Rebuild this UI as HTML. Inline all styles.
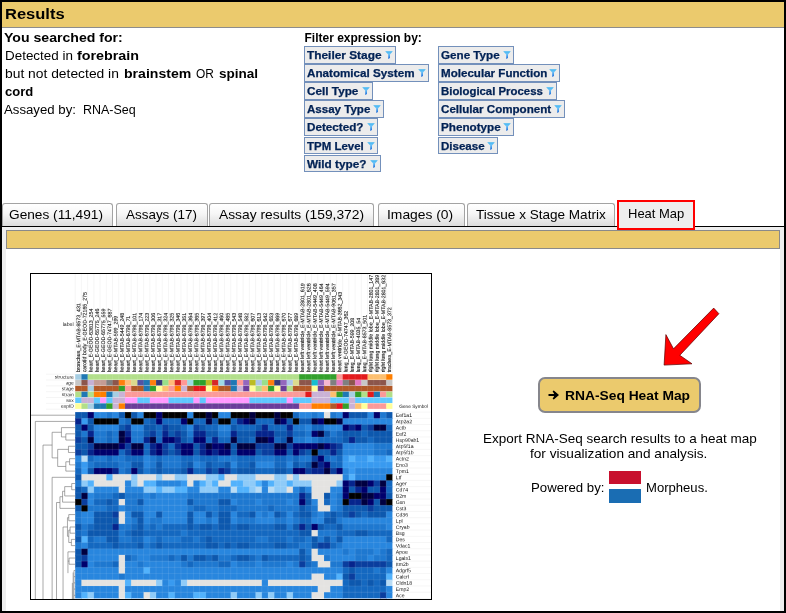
<!DOCTYPE html>
<html><head><meta charset="utf-8">
<style>
html,body{margin:0;padding:0;}
body{width:786px;height:613px;position:relative;overflow:hidden;background:#000;font-family:"Liberation Sans",sans-serif;color:#000;}
#page{position:absolute;left:2px;top:2px;width:782px;height:609px;background:#fff;overflow:hidden;}
#L{position:absolute;left:0;top:0;width:782px;height:609px;will-change:transform;}
.abs{position:absolute;white-space:nowrap;}
#hdr{position:absolute;left:0;top:0;width:782px;height:25px;background:#ebca6d;border-bottom:1px solid #8c8c8c;}
#hdr span{position:absolute;left:4px;top:3px;font-weight:bold;font-size:16px;letter-spacing:0.1px;line-height:18px;}
.fb{position:absolute;height:15.6px;border:1px solid #7390bb;background:#ececec;box-sizing:content-box;}
.fb span{position:absolute;left:1.7px;top:1px;font-weight:bold;font-size:10px;line-height:15px;color:#002255;-webkit-text-stroke:0.25px #002255;white-space:nowrap;}
.fb svg{position:absolute;right:2px;top:4px;}
.tab{position:absolute;top:201px;height:23px;border:1px solid #a3a3a3;border-bottom:none;border-radius:3px 3px 0 0;background:linear-gradient(#ffffff 0%,#f6f6f6 45%,#dcdcdc 100%);box-sizing:border-box;font-size:13px;line-height:21px;white-space:nowrap;}
</style></head><body>
<div id="page"><div id="L">
<div id="hdr"></div>
<div class="abs" style="left:1.80px;top:27.00px;font-size:12.5px;line-height:18px;transform-origin:0 0;transform:scaleX(1.1276);font-weight:bold;">You searched for:</div>
<div class="abs" style="left:2.60px;top:45.00px;font-size:12.5px;line-height:18px;transform-origin:0 0;transform:scaleX(1.0738);">Detected in</div>
<div class="abs" style="left:75.00px;top:45.00px;font-size:12.5px;line-height:18px;transform-origin:0 0;transform:scaleX(1.1442);font-weight:bold;">forebrain</div>
<div class="abs" style="left:2.60px;top:63.00px;font-size:12.5px;line-height:18px;transform-origin:0 0;transform:scaleX(1.1073);">but not detected in</div>
<div class="abs" style="left:121.70px;top:63.00px;font-size:12.5px;line-height:18px;transform-origin:0 0;transform:scaleX(1.1264);font-weight:bold;">brainstem</div>
<div class="abs" style="left:193.80px;top:63.00px;font-size:12.5px;line-height:18px;transform-origin:0 0;transform:scaleX(0.9547);">OR</div>
<div class="abs" style="left:216.50px;top:63.00px;font-size:12.5px;line-height:18px;transform-origin:0 0;transform:scaleX(1.0824);font-weight:bold;">spinal</div>
<div class="abs" style="left:2.60px;top:81.00px;font-size:12.5px;line-height:18px;transform-origin:0 0;transform:scaleX(1.0445);font-weight:bold;">cord</div>
<div class="abs" style="left:2.40px;top:99.00px;font-size:12.5px;line-height:18px;transform-origin:0 0;transform:scaleX(1.0559);">Assayed by:</div>
<div class="abs" style="left:80.50px;top:99.00px;font-size:12.5px;line-height:18px;transform-origin:0 0;transform:scaleX(0.9982);">RNA-Seq</div>
<div class="abs" style="left:3.00px;top:3.00px;font-size:14px;line-height:18px;transform-origin:0 0;transform:scaleX(1.1784);font-weight:bold;">Results</div>
<div class="abs" style="left:302.5px;top:29px;font-weight:bold;font-size:12px;line-height:14px;">Filter expression by:</div>
<div class="fb" style="left:302px;top:44.0px;width:90.0px"><span style="transform-origin:0 0;transform:scaleX(1.1861)">Theiler Stage</span><svg width="8" height="8" viewBox="0 0 8 8"><defs><linearGradient id="fg" x1="0" y1="0" x2="0" y2="1"><stop offset="0" stop-color="#3db4f2"/><stop offset="0.35" stop-color="#6cc4f8"/><stop offset="1" stop-color="#1a68d8"/></linearGradient></defs><path d="M0.2 0.3 H7.8 L5 3.6 V6.9 L3.2 7.9 V3.6 Z" fill="url(#fg)"/></svg></div>
<div class="fb" style="left:302px;top:62.1px;width:122.6px"><span style="transform-origin:0 0;transform:scaleX(1.1651)">Anatomical System</span><svg width="8" height="8" viewBox="0 0 8 8"><defs><linearGradient id="fg" x1="0" y1="0" x2="0" y2="1"><stop offset="0" stop-color="#3db4f2"/><stop offset="0.35" stop-color="#6cc4f8"/><stop offset="1" stop-color="#1a68d8"/></linearGradient></defs><path d="M0.2 0.3 H7.8 L5 3.6 V6.9 L3.2 7.9 V3.6 Z" fill="url(#fg)"/></svg></div>
<div class="fb" style="left:302px;top:80.2px;width:66.7px"><span style="transform-origin:0 0;transform:scaleX(1.1757)">Cell Type</span><svg width="8" height="8" viewBox="0 0 8 8"><defs><linearGradient id="fg" x1="0" y1="0" x2="0" y2="1"><stop offset="0" stop-color="#3db4f2"/><stop offset="0.35" stop-color="#6cc4f8"/><stop offset="1" stop-color="#1a68d8"/></linearGradient></defs><path d="M0.2 0.3 H7.8 L5 3.6 V6.9 L3.2 7.9 V3.6 Z" fill="url(#fg)"/></svg></div>
<div class="fb" style="left:302px;top:98.3px;width:78.4px"><span style="transform-origin:0 0;transform:scaleX(1.1542)">Assay Type</span><svg width="8" height="8" viewBox="0 0 8 8"><defs><linearGradient id="fg" x1="0" y1="0" x2="0" y2="1"><stop offset="0" stop-color="#3db4f2"/><stop offset="0.35" stop-color="#6cc4f8"/><stop offset="1" stop-color="#1a68d8"/></linearGradient></defs><path d="M0.2 0.3 H7.8 L5 3.6 V6.9 L3.2 7.9 V3.6 Z" fill="url(#fg)"/></svg></div>
<div class="fb" style="left:302px;top:116.4px;width:71.5px"><span style="transform-origin:0 0;transform:scaleX(1.1683)">Detected?</span><svg width="8" height="8" viewBox="0 0 8 8"><defs><linearGradient id="fg" x1="0" y1="0" x2="0" y2="1"><stop offset="0" stop-color="#3db4f2"/><stop offset="0.35" stop-color="#6cc4f8"/><stop offset="1" stop-color="#1a68d8"/></linearGradient></defs><path d="M0.2 0.3 H7.8 L5 3.6 V6.9 L3.2 7.9 V3.6 Z" fill="url(#fg)"/></svg></div>
<div class="fb" style="left:302px;top:134.5px;width:71.5px"><span style="transform-origin:0 0;transform:scaleX(1.1462)">TPM Level</span><svg width="8" height="8" viewBox="0 0 8 8"><defs><linearGradient id="fg" x1="0" y1="0" x2="0" y2="1"><stop offset="0" stop-color="#3db4f2"/><stop offset="0.35" stop-color="#6cc4f8"/><stop offset="1" stop-color="#1a68d8"/></linearGradient></defs><path d="M0.2 0.3 H7.8 L5 3.6 V6.9 L3.2 7.9 V3.6 Z" fill="url(#fg)"/></svg></div>
<div class="fb" style="left:302px;top:152.6px;width:74.7px"><span style="transform-origin:0 0;transform:scaleX(1.1789)">Wild type?</span><svg width="8" height="8" viewBox="0 0 8 8"><defs><linearGradient id="fg" x1="0" y1="0" x2="0" y2="1"><stop offset="0" stop-color="#3db4f2"/><stop offset="0.35" stop-color="#6cc4f8"/><stop offset="1" stop-color="#1a68d8"/></linearGradient></defs><path d="M0.2 0.3 H7.8 L5 3.6 V6.9 L3.2 7.9 V3.6 Z" fill="url(#fg)"/></svg></div>
<div class="fb" style="left:436px;top:44.0px;width:73.6px"><span style="transform-origin:0 0;transform:scaleX(1.1649)">Gene Type</span><svg width="8" height="8" viewBox="0 0 8 8"><defs><linearGradient id="fg" x1="0" y1="0" x2="0" y2="1"><stop offset="0" stop-color="#3db4f2"/><stop offset="0.35" stop-color="#6cc4f8"/><stop offset="1" stop-color="#1a68d8"/></linearGradient></defs><path d="M0.2 0.3 H7.8 L5 3.6 V6.9 L3.2 7.9 V3.6 Z" fill="url(#fg)"/></svg></div>
<div class="fb" style="left:436px;top:62.1px;width:120.4px"><span style="transform-origin:0 0;transform:scaleX(1.1596)">Molecular Function</span><svg width="8" height="8" viewBox="0 0 8 8"><defs><linearGradient id="fg" x1="0" y1="0" x2="0" y2="1"><stop offset="0" stop-color="#3db4f2"/><stop offset="0.35" stop-color="#6cc4f8"/><stop offset="1" stop-color="#1a68d8"/></linearGradient></defs><path d="M0.2 0.3 H7.8 L5 3.6 V6.9 L3.2 7.9 V3.6 Z" fill="url(#fg)"/></svg></div>
<div class="fb" style="left:436px;top:80.2px;width:116.5px"><span style="transform-origin:0 0;transform:scaleX(1.1376)">Biological Process</span><svg width="8" height="8" viewBox="0 0 8 8"><defs><linearGradient id="fg" x1="0" y1="0" x2="0" y2="1"><stop offset="0" stop-color="#3db4f2"/><stop offset="0.35" stop-color="#6cc4f8"/><stop offset="1" stop-color="#1a68d8"/></linearGradient></defs><path d="M0.2 0.3 H7.8 L5 3.6 V6.9 L3.2 7.9 V3.6 Z" fill="url(#fg)"/></svg></div>
<div class="fb" style="left:436px;top:98.3px;width:124.5px"><span style="transform-origin:0 0;transform:scaleX(1.1598)">Cellular Component</span><svg width="8" height="8" viewBox="0 0 8 8"><defs><linearGradient id="fg" x1="0" y1="0" x2="0" y2="1"><stop offset="0" stop-color="#3db4f2"/><stop offset="0.35" stop-color="#6cc4f8"/><stop offset="1" stop-color="#1a68d8"/></linearGradient></defs><path d="M0.2 0.3 H7.8 L5 3.6 V6.9 L3.2 7.9 V3.6 Z" fill="url(#fg)"/></svg></div>
<div class="fb" style="left:436px;top:116.4px;width:74.4px"><span style="transform-origin:0 0;transform:scaleX(1.1677)">Phenotype</span><svg width="8" height="8" viewBox="0 0 8 8"><defs><linearGradient id="fg" x1="0" y1="0" x2="0" y2="1"><stop offset="0" stop-color="#3db4f2"/><stop offset="0.35" stop-color="#6cc4f8"/><stop offset="1" stop-color="#1a68d8"/></linearGradient></defs><path d="M0.2 0.3 H7.8 L5 3.6 V6.9 L3.2 7.9 V3.6 Z" fill="url(#fg)"/></svg></div>
<div class="fb" style="left:436px;top:134.5px;width:58.3px"><span style="transform-origin:0 0;transform:scaleX(1.1531)">Disease</span><svg width="8" height="8" viewBox="0 0 8 8"><defs><linearGradient id="fg" x1="0" y1="0" x2="0" y2="1"><stop offset="0" stop-color="#3db4f2"/><stop offset="0.35" stop-color="#6cc4f8"/><stop offset="1" stop-color="#1a68d8"/></linearGradient></defs><path d="M0.2 0.3 H7.8 L5 3.6 V6.9 L3.2 7.9 V3.6 Z" fill="url(#fg)"/></svg></div>
<div class="tab" style="left:0.0px;width:111.4px;"><span style="position:absolute;left:6.3px;top:0;transform-origin:0 0;transform:scaleX(1.0517)">Genes (11,491)</span></div>
<div class="tab" style="left:114.0px;width:91.6px;"><span style="position:absolute;left:9.0px;top:0;transform-origin:0 0;transform:scaleX(1.0344)">Assays (17)</span></div>
<div class="tab" style="left:207.2px;width:165.3px;"><span style="position:absolute;left:9.1px;top:0;transform-origin:0 0;transform:scaleX(1.0624)">Assay results (159,372)</span></div>
<div class="tab" style="left:375.6px;width:87.1px;"><span style="position:absolute;left:8.2px;top:0;transform-origin:0 0;transform:scaleX(1.0653)">Images (0)</span></div>
<div class="tab" style="left:464.7px;width:148.6px;"><span style="position:absolute;left:8.2px;top:0;transform-origin:0 0;transform:scaleX(1.0416)">Tissue x Stage Matrix</span></div>
<div class="abs" style="left:0;top:224px;width:782px;height:1px;background:#000"></div>
<div class="abs" style="left:615px;top:198px;width:74px;height:26px;border:2px solid #f00;background:#eeeeee;z-index:5;"><span style="position:absolute;left:9.4px;top:3px;font-size:13px;line-height:18px;transform-origin:0 0;transform:scaleX(0.9987)">Heat Map</span></div>
<div class="abs" style="left:0;top:225px;width:782px;height:384px;background:#fff;border-left:4px solid #eee;border-right:4px solid #eee;border-top:3px solid #eee;box-sizing:border-box"></div>
<div class="abs" style="left:4px;top:228px;width:774px;height:19px;background:#ebca6d;border:1px solid #8a8a8a;box-sizing:border-box"></div>
<div class="abs" style="left:536px;top:375px;width:163px;height:36px;box-sizing:border-box;border:2px solid #86868c;border-radius:7px;background:#ebca6d"></div>
<div class="abs" style="left:563.00px;top:386.00px;font-size:13px;line-height:16px;transform-origin:0 0;transform:scaleX(1.0616);font-weight:bold;">RNA-Seq Heat Map</div>
<svg class="abs" style="left:546px;top:388px" width="12" height="10" viewBox="0 0 12 10"><path d="M0.5 4 H6.2 L4.6 1.3 L5.8 0.6 L11 5 L5.8 9.4 L4.6 8.7 L6.2 6 H0.5 Z" fill="#000"/></svg>
<div class="abs" style="left:480.60px;top:429.00px;font-size:13px;line-height:16px;transform-origin:0 0;transform:scaleX(1.0378);">Export RNA-Seq search results to a heat map</div>
<div class="abs" style="left:528.00px;top:444.00px;font-size:13px;line-height:16px;transform-origin:0 0;transform:scaleX(1.0491);">for visualization and analysis.</div>
<div class="abs" style="left:529.00px;top:478.00px;font-size:13px;line-height:16px;transform-origin:0 0;transform:scaleX(1.0157);">Powered by:</div>
<div class="abs" style="left:643.60px;top:478.00px;font-size:13px;line-height:16px;transform-origin:0 0;transform:scaleX(1.0062);">Morpheus.</div>
<div class="abs" style="left:607px;top:469px;width:32px;height:13px;background:#c8102e"></div>
<div class="abs" style="left:607px;top:487px;width:32px;height:13.5px;background:#1a6db3"></div>
<svg class="abs" style="left:648px;top:293px" width="80" height="80" viewBox="650 295 80 80"><path d="M713.7 308.1 L718.9 313.7 L679.8 355.3 L692 363.8 L664.1 365.1 L665.9 334.6 L673.5 348.8 Z" fill="#ff0000" stroke="#5a0000" stroke-width="0.7" stroke-linejoin="miter"/></svg>
<div class="abs" style="left:28px;top:271px;width:402px;height:327px;box-sizing:border-box;border:1px solid #000;background:#fff"></div>
<svg class="abs" style="left:29px;top:272px" width="400" height="325" viewBox="31 274 400 325" font-family="Liberation Sans, sans-serif" text-rendering="geometricPrecision">
<line x1="75.20" y1="274" x2="75.20" y2="373" stroke="#f0f0f0" stroke-width="0.6"/>
<line x1="81.42" y1="274" x2="81.42" y2="373" stroke="#f0f0f0" stroke-width="0.6"/>
<line x1="87.64" y1="274" x2="87.64" y2="373" stroke="#f0f0f0" stroke-width="0.6"/>
<line x1="93.86" y1="274" x2="93.86" y2="373" stroke="#f0f0f0" stroke-width="0.6"/>
<line x1="100.08" y1="274" x2="100.08" y2="373" stroke="#f0f0f0" stroke-width="0.6"/>
<line x1="106.30" y1="274" x2="106.30" y2="373" stroke="#f0f0f0" stroke-width="0.6"/>
<line x1="112.52" y1="274" x2="112.52" y2="373" stroke="#f0f0f0" stroke-width="0.6"/>
<line x1="118.74" y1="274" x2="118.74" y2="373" stroke="#f0f0f0" stroke-width="0.6"/>
<line x1="124.96" y1="274" x2="124.96" y2="373" stroke="#f0f0f0" stroke-width="0.6"/>
<line x1="131.18" y1="274" x2="131.18" y2="373" stroke="#f0f0f0" stroke-width="0.6"/>
<line x1="137.40" y1="274" x2="137.40" y2="373" stroke="#f0f0f0" stroke-width="0.6"/>
<line x1="143.62" y1="274" x2="143.62" y2="373" stroke="#f0f0f0" stroke-width="0.6"/>
<line x1="149.84" y1="274" x2="149.84" y2="373" stroke="#f0f0f0" stroke-width="0.6"/>
<line x1="156.06" y1="274" x2="156.06" y2="373" stroke="#f0f0f0" stroke-width="0.6"/>
<line x1="162.28" y1="274" x2="162.28" y2="373" stroke="#f0f0f0" stroke-width="0.6"/>
<line x1="168.50" y1="274" x2="168.50" y2="373" stroke="#f0f0f0" stroke-width="0.6"/>
<line x1="174.72" y1="274" x2="174.72" y2="373" stroke="#f0f0f0" stroke-width="0.6"/>
<line x1="180.94" y1="274" x2="180.94" y2="373" stroke="#f0f0f0" stroke-width="0.6"/>
<line x1="187.16" y1="274" x2="187.16" y2="373" stroke="#f0f0f0" stroke-width="0.6"/>
<line x1="193.38" y1="274" x2="193.38" y2="373" stroke="#f0f0f0" stroke-width="0.6"/>
<line x1="199.60" y1="274" x2="199.60" y2="373" stroke="#f0f0f0" stroke-width="0.6"/>
<line x1="205.82" y1="274" x2="205.82" y2="373" stroke="#f0f0f0" stroke-width="0.6"/>
<line x1="212.04" y1="274" x2="212.04" y2="373" stroke="#f0f0f0" stroke-width="0.6"/>
<line x1="218.26" y1="274" x2="218.26" y2="373" stroke="#f0f0f0" stroke-width="0.6"/>
<line x1="224.48" y1="274" x2="224.48" y2="373" stroke="#f0f0f0" stroke-width="0.6"/>
<line x1="230.70" y1="274" x2="230.70" y2="373" stroke="#f0f0f0" stroke-width="0.6"/>
<line x1="236.92" y1="274" x2="236.92" y2="373" stroke="#f0f0f0" stroke-width="0.6"/>
<line x1="243.14" y1="274" x2="243.14" y2="373" stroke="#f0f0f0" stroke-width="0.6"/>
<line x1="249.36" y1="274" x2="249.36" y2="373" stroke="#f0f0f0" stroke-width="0.6"/>
<line x1="255.58" y1="274" x2="255.58" y2="373" stroke="#f0f0f0" stroke-width="0.6"/>
<line x1="261.80" y1="274" x2="261.80" y2="373" stroke="#f0f0f0" stroke-width="0.6"/>
<line x1="268.02" y1="274" x2="268.02" y2="373" stroke="#f0f0f0" stroke-width="0.6"/>
<line x1="274.24" y1="274" x2="274.24" y2="373" stroke="#f0f0f0" stroke-width="0.6"/>
<line x1="280.46" y1="274" x2="280.46" y2="373" stroke="#f0f0f0" stroke-width="0.6"/>
<line x1="286.68" y1="274" x2="286.68" y2="373" stroke="#f0f0f0" stroke-width="0.6"/>
<line x1="292.90" y1="274" x2="292.90" y2="373" stroke="#f0f0f0" stroke-width="0.6"/>
<line x1="299.12" y1="274" x2="299.12" y2="373" stroke="#f0f0f0" stroke-width="0.6"/>
<line x1="305.34" y1="274" x2="305.34" y2="373" stroke="#f0f0f0" stroke-width="0.6"/>
<line x1="311.56" y1="274" x2="311.56" y2="373" stroke="#f0f0f0" stroke-width="0.6"/>
<line x1="317.78" y1="274" x2="317.78" y2="373" stroke="#f0f0f0" stroke-width="0.6"/>
<line x1="324.00" y1="274" x2="324.00" y2="373" stroke="#f0f0f0" stroke-width="0.6"/>
<line x1="330.22" y1="274" x2="330.22" y2="373" stroke="#f0f0f0" stroke-width="0.6"/>
<line x1="336.44" y1="274" x2="336.44" y2="373" stroke="#f0f0f0" stroke-width="0.6"/>
<line x1="342.66" y1="274" x2="342.66" y2="373" stroke="#f0f0f0" stroke-width="0.6"/>
<line x1="348.88" y1="274" x2="348.88" y2="373" stroke="#f0f0f0" stroke-width="0.6"/>
<line x1="355.10" y1="274" x2="355.10" y2="373" stroke="#f0f0f0" stroke-width="0.6"/>
<line x1="361.32" y1="274" x2="361.32" y2="373" stroke="#f0f0f0" stroke-width="0.6"/>
<line x1="367.54" y1="274" x2="367.54" y2="373" stroke="#f0f0f0" stroke-width="0.6"/>
<line x1="373.76" y1="274" x2="373.76" y2="373" stroke="#f0f0f0" stroke-width="0.6"/>
<line x1="379.98" y1="274" x2="379.98" y2="373" stroke="#f0f0f0" stroke-width="0.6"/>
<line x1="386.20" y1="274" x2="386.20" y2="373" stroke="#f0f0f0" stroke-width="0.6"/>
<line x1="392.42" y1="274" x2="392.42" y2="373" stroke="#f0f0f0" stroke-width="0.6"/>
<line x1="46" y1="374.20" x2="75" y2="374.20" stroke="#eeeeee" stroke-width="0.6"/>
<line x1="46" y1="380.03" x2="75" y2="380.03" stroke="#eeeeee" stroke-width="0.6"/>
<line x1="46" y1="385.86" x2="75" y2="385.86" stroke="#eeeeee" stroke-width="0.6"/>
<line x1="46" y1="391.69" x2="75" y2="391.69" stroke="#eeeeee" stroke-width="0.6"/>
<line x1="46" y1="397.52" x2="75" y2="397.52" stroke="#eeeeee" stroke-width="0.6"/>
<line x1="46" y1="403.35" x2="75" y2="403.35" stroke="#eeeeee" stroke-width="0.6"/>
<line x1="46" y1="409.18" x2="75" y2="409.18" stroke="#eeeeee" stroke-width="0.6"/>
<line x1="393" y1="412.10" x2="431" y2="412.10" stroke="#f0f0f0" stroke-width="0.6"/>
<line x1="393" y1="418.31" x2="431" y2="418.31" stroke="#f0f0f0" stroke-width="0.6"/>
<line x1="393" y1="424.52" x2="431" y2="424.52" stroke="#f0f0f0" stroke-width="0.6"/>
<line x1="393" y1="430.73" x2="431" y2="430.73" stroke="#f0f0f0" stroke-width="0.6"/>
<line x1="393" y1="436.94" x2="431" y2="436.94" stroke="#f0f0f0" stroke-width="0.6"/>
<line x1="393" y1="443.15" x2="431" y2="443.15" stroke="#f0f0f0" stroke-width="0.6"/>
<line x1="393" y1="449.36" x2="431" y2="449.36" stroke="#f0f0f0" stroke-width="0.6"/>
<line x1="393" y1="455.57" x2="431" y2="455.57" stroke="#f0f0f0" stroke-width="0.6"/>
<line x1="393" y1="461.78" x2="431" y2="461.78" stroke="#f0f0f0" stroke-width="0.6"/>
<line x1="393" y1="467.99" x2="431" y2="467.99" stroke="#f0f0f0" stroke-width="0.6"/>
<line x1="393" y1="474.20" x2="431" y2="474.20" stroke="#f0f0f0" stroke-width="0.6"/>
<line x1="393" y1="480.41" x2="431" y2="480.41" stroke="#f0f0f0" stroke-width="0.6"/>
<line x1="393" y1="486.62" x2="431" y2="486.62" stroke="#f0f0f0" stroke-width="0.6"/>
<line x1="393" y1="492.83" x2="431" y2="492.83" stroke="#f0f0f0" stroke-width="0.6"/>
<line x1="393" y1="499.04" x2="431" y2="499.04" stroke="#f0f0f0" stroke-width="0.6"/>
<line x1="393" y1="505.25" x2="431" y2="505.25" stroke="#f0f0f0" stroke-width="0.6"/>
<line x1="393" y1="511.46" x2="431" y2="511.46" stroke="#f0f0f0" stroke-width="0.6"/>
<line x1="393" y1="517.67" x2="431" y2="517.67" stroke="#f0f0f0" stroke-width="0.6"/>
<line x1="393" y1="523.88" x2="431" y2="523.88" stroke="#f0f0f0" stroke-width="0.6"/>
<line x1="393" y1="530.09" x2="431" y2="530.09" stroke="#f0f0f0" stroke-width="0.6"/>
<line x1="393" y1="536.30" x2="431" y2="536.30" stroke="#f0f0f0" stroke-width="0.6"/>
<line x1="393" y1="542.51" x2="431" y2="542.51" stroke="#f0f0f0" stroke-width="0.6"/>
<line x1="393" y1="548.72" x2="431" y2="548.72" stroke="#f0f0f0" stroke-width="0.6"/>
<line x1="393" y1="554.93" x2="431" y2="554.93" stroke="#f0f0f0" stroke-width="0.6"/>
<line x1="393" y1="561.14" x2="431" y2="561.14" stroke="#f0f0f0" stroke-width="0.6"/>
<line x1="393" y1="567.35" x2="431" y2="567.35" stroke="#f0f0f0" stroke-width="0.6"/>
<line x1="393" y1="573.56" x2="431" y2="573.56" stroke="#f0f0f0" stroke-width="0.6"/>
<line x1="393" y1="579.77" x2="431" y2="579.77" stroke="#f0f0f0" stroke-width="0.6"/>
<line x1="393" y1="585.98" x2="431" y2="585.98" stroke="#f0f0f0" stroke-width="0.6"/>
<line x1="393" y1="592.19" x2="431" y2="592.19" stroke="#f0f0f0" stroke-width="0.6"/>
<line x1="393" y1="598.40" x2="431" y2="598.40" stroke="#f0f0f0" stroke-width="0.6"/>
<text transform="translate(80.01 372.3) rotate(-89.7)" font-size="5.25" fill="#111" stroke="#111" stroke-width="0.1">bronchus_E-MTAB-8573_431</text>
<text transform="translate(86.23 372.3) rotate(-89.7)" font-size="5.25" fill="#111" stroke="#111" stroke-width="0.1">carotid body_E-GEOD-72165_275</text>
<text transform="translate(92.45 372.3) rotate(-89.7)" font-size="5.25" fill="#111" stroke="#111" stroke-width="0.1">heart_E-GEOD-63813_254</text>
<text transform="translate(98.67 372.3) rotate(-89.7)" font-size="5.25" fill="#111" stroke="#111" stroke-width="0.1">heart_E-GEOD-65775_246</text>
<text transform="translate(104.89 372.3) rotate(-89.7)" font-size="5.25" fill="#111" stroke="#111" stroke-width="0.1">heart_E-GEOD-65775_559</text>
<text transform="translate(111.11 372.3) rotate(-89.7)" font-size="5.25" fill="#111" stroke="#111" stroke-width="0.1">heart_E-GEOD-74747_687</text>
<text transform="translate(117.33 372.3) rotate(-89.7)" font-size="5.25" fill="#111" stroke="#111" stroke-width="0.1">heart_E-MTAB-599_299</text>
<text transform="translate(123.55 372.3) rotate(-89.7)" font-size="5.25" fill="#111" stroke="#111" stroke-width="0.1">heart_E-MTAB-5449_248</text>
<text transform="translate(129.77 372.3) rotate(-89.7)" font-size="5.25" fill="#111" stroke="#111" stroke-width="0.1">heart_E-MTAB-6798_71</text>
<text transform="translate(135.99 372.3) rotate(-89.7)" font-size="5.25" fill="#111" stroke="#111" stroke-width="0.1">heart_E-MTAB-6798_101</text>
<text transform="translate(142.21 372.3) rotate(-89.7)" font-size="5.25" fill="#111" stroke="#111" stroke-width="0.1">heart_E-MTAB-6798_174</text>
<text transform="translate(148.43 372.3) rotate(-89.7)" font-size="5.25" fill="#111" stroke="#111" stroke-width="0.1">heart_E-MTAB-6798_223</text>
<text transform="translate(154.65 372.3) rotate(-89.7)" font-size="5.25" fill="#111" stroke="#111" stroke-width="0.1">heart_E-MTAB-6798_306</text>
<text transform="translate(160.87 372.3) rotate(-89.7)" font-size="5.25" fill="#111" stroke="#111" stroke-width="0.1">heart_E-MTAB-6798_317</text>
<text transform="translate(167.09 372.3) rotate(-89.7)" font-size="5.25" fill="#111" stroke="#111" stroke-width="0.1">heart_E-MTAB-6798_324</text>
<text transform="translate(173.31 372.3) rotate(-89.7)" font-size="5.25" fill="#111" stroke="#111" stroke-width="0.1">heart_E-MTAB-6798_325</text>
<text transform="translate(179.53 372.3) rotate(-89.7)" font-size="5.25" fill="#111" stroke="#111" stroke-width="0.1">heart_E-MTAB-6798_346</text>
<text transform="translate(185.75 372.3) rotate(-89.7)" font-size="5.25" fill="#111" stroke="#111" stroke-width="0.1">heart_E-MTAB-6798_351</text>
<text transform="translate(191.97 372.3) rotate(-89.7)" font-size="5.25" fill="#111" stroke="#111" stroke-width="0.1">heart_E-MTAB-6798_364</text>
<text transform="translate(198.19 372.3) rotate(-89.7)" font-size="5.25" fill="#111" stroke="#111" stroke-width="0.1">heart_E-MTAB-6798_365</text>
<text transform="translate(204.41 372.3) rotate(-89.7)" font-size="5.25" fill="#111" stroke="#111" stroke-width="0.1">heart_E-MTAB-6798_397</text>
<text transform="translate(210.63 372.3) rotate(-89.7)" font-size="5.25" fill="#111" stroke="#111" stroke-width="0.1">heart_E-MTAB-6798_404</text>
<text transform="translate(216.85 372.3) rotate(-89.7)" font-size="5.25" fill="#111" stroke="#111" stroke-width="0.1">heart_E-MTAB-6798_412</text>
<text transform="translate(223.07 372.3) rotate(-89.7)" font-size="5.25" fill="#111" stroke="#111" stroke-width="0.1">heart_E-MTAB-6798_460</text>
<text transform="translate(229.29 372.3) rotate(-89.7)" font-size="5.25" fill="#111" stroke="#111" stroke-width="0.1">heart_E-MTAB-6798_485</text>
<text transform="translate(235.51 372.3) rotate(-89.7)" font-size="5.25" fill="#111" stroke="#111" stroke-width="0.1">heart_E-MTAB-6798_543</text>
<text transform="translate(241.73 372.3) rotate(-89.7)" font-size="5.25" fill="#111" stroke="#111" stroke-width="0.1">heart_E-MTAB-6798_548</text>
<text transform="translate(247.95 372.3) rotate(-89.7)" font-size="5.25" fill="#111" stroke="#111" stroke-width="0.1">heart_E-MTAB-6798_582</text>
<text transform="translate(254.17 372.3) rotate(-89.7)" font-size="5.25" fill="#111" stroke="#111" stroke-width="0.1">heart_E-MTAB-6798_607</text>
<text transform="translate(260.39 372.3) rotate(-89.7)" font-size="5.25" fill="#111" stroke="#111" stroke-width="0.1">heart_E-MTAB-6798_613</text>
<text transform="translate(266.61 372.3) rotate(-89.7)" font-size="5.25" fill="#111" stroke="#111" stroke-width="0.1">heart_E-MTAB-6798_642</text>
<text transform="translate(272.83 372.3) rotate(-89.7)" font-size="5.25" fill="#111" stroke="#111" stroke-width="0.1">heart_E-MTAB-6798_653</text>
<text transform="translate(279.05 372.3) rotate(-89.7)" font-size="5.25" fill="#111" stroke="#111" stroke-width="0.1">heart_E-MTAB-6798_669</text>
<text transform="translate(285.27 372.3) rotate(-89.7)" font-size="5.25" fill="#111" stroke="#111" stroke-width="0.1">heart_E-MTAB-6798_670</text>
<text transform="translate(291.49 372.3) rotate(-89.7)" font-size="5.25" fill="#111" stroke="#111" stroke-width="0.1">heart_E-MTAB-6798_677</text>
<text transform="translate(297.71 372.3) rotate(-89.7)" font-size="5.25" fill="#111" stroke="#111" stroke-width="0.1">heart_E-MTAB-6798_689</text>
<text transform="translate(303.93 372.3) rotate(-89.7)" font-size="5.25" fill="#111" stroke="#111" stroke-width="0.1">heart left ventricle_E-MTAB-2801_619</text>
<text transform="translate(310.15 372.3) rotate(-89.7)" font-size="5.25" fill="#111" stroke="#111" stroke-width="0.1">heart left ventricle_E-MTAB-2801_626</text>
<text transform="translate(316.37 372.3) rotate(-89.7)" font-size="5.25" fill="#111" stroke="#111" stroke-width="0.1">heart left ventricle_E-MTAB-5449_408</text>
<text transform="translate(322.59 372.3) rotate(-89.7)" font-size="5.25" fill="#111" stroke="#111" stroke-width="0.1">heart left ventricle_E-MTAB-5449_464</text>
<text transform="translate(328.81 372.3) rotate(-89.7)" font-size="5.25" fill="#111" stroke="#111" stroke-width="0.1">heart left ventricle_E-MTAB-5449_594</text>
<text transform="translate(335.03 372.3) rotate(-89.7)" font-size="5.25" fill="#111" stroke="#111" stroke-width="0.1">heart left ventricle_E-MTAB-9061_357</text>
<text transform="translate(341.25 372.3) rotate(-89.7)" font-size="5.25" fill="#111" stroke="#111" stroke-width="0.1">heart ventricle_E-MTAB-3662_343</text>
<text transform="translate(347.47 372.3) rotate(-89.7)" font-size="5.25" fill="#111" stroke="#111" stroke-width="0.1">lung_E-GEOD-74747_362</text>
<text transform="translate(353.69 372.3) rotate(-89.7)" font-size="5.25" fill="#111" stroke="#111" stroke-width="0.1">lung_E-MTAB-599_208</text>
<text transform="translate(359.91 372.3) rotate(-89.7)" font-size="5.25" fill="#111" stroke="#111" stroke-width="0.1">lung_E-MTAB-4035_54</text>
<text transform="translate(366.13 372.3) rotate(-89.7)" font-size="5.25" fill="#111" stroke="#111" stroke-width="0.1">lung_E-MTAB-8573_501</text>
<text transform="translate(372.35 372.3) rotate(-89.7)" font-size="5.25" fill="#111" stroke="#111" stroke-width="0.1">right lung middle lobe_E-MTAB-2801_147</text>
<text transform="translate(378.57 372.3) rotate(-89.7)" font-size="5.25" fill="#111" stroke="#111" stroke-width="0.1">right lung middle lobe_E-MTAB-2801_389</text>
<text transform="translate(384.79 372.3) rotate(-89.7)" font-size="5.25" fill="#111" stroke="#111" stroke-width="0.1">right lung middle lobe_E-MTAB-2801_632</text>
<text transform="translate(391.01 372.3) rotate(-89.7)" font-size="5.25" fill="#111" stroke="#111" stroke-width="0.1">trachea_E-MTAB-8573_372</text>
<rect x="75.20" y="374.20" width="6.82" height="5.53" fill="#a6cee3"/>
<rect x="81.42" y="374.20" width="6.82" height="5.53" fill="#1f78b4"/>
<rect x="87.64" y="374.20" width="212.08" height="5.53" fill="#b2df8a"/>
<rect x="299.12" y="374.20" width="37.92" height="5.53" fill="#33a02c"/>
<rect x="336.44" y="374.20" width="6.82" height="5.53" fill="#fb9a99"/>
<rect x="342.66" y="374.20" width="25.48" height="5.53" fill="#e31a1c"/>
<rect x="367.54" y="374.20" width="19.26" height="5.53" fill="#fdbf6f"/>
<rect x="386.20" y="374.20" width="6.22" height="5.53" fill="#ff7f00"/>
<rect x="75.20" y="380.03" width="6.82" height="5.53" fill="#c7c7c7"/>
<rect x="81.42" y="380.03" width="6.82" height="5.53" fill="#8c564b"/>
<rect x="87.64" y="380.03" width="6.82" height="5.53" fill="#c5b0d5"/>
<rect x="93.86" y="380.03" width="13.04" height="5.53" fill="#c49c94"/>
<rect x="106.30" y="380.03" width="6.82" height="5.53" fill="#7f7f7f"/>
<rect x="112.52" y="380.03" width="6.82" height="5.53" fill="#8c564b"/>
<rect x="118.74" y="380.03" width="6.82" height="5.53" fill="#ff7f0e"/>
<rect x="124.96" y="380.03" width="6.82" height="5.53" fill="#ffbb78"/>
<rect x="131.18" y="380.03" width="6.82" height="5.53" fill="#dbdb8d"/>
<rect x="137.40" y="380.03" width="6.82" height="5.53" fill="#5254a3"/>
<rect x="143.62" y="380.03" width="6.82" height="5.53" fill="#1f77b4"/>
<rect x="149.84" y="380.03" width="6.82" height="5.53" fill="#ff7f0e"/>
<rect x="156.06" y="380.03" width="6.82" height="5.53" fill="#393b79"/>
<rect x="162.28" y="380.03" width="6.82" height="5.53" fill="#98df8a"/>
<rect x="168.50" y="380.03" width="6.82" height="5.53" fill="#ffbb78"/>
<rect x="174.72" y="380.03" width="6.82" height="5.53" fill="#d62728"/>
<rect x="180.94" y="380.03" width="6.82" height="5.53" fill="#ff9896"/>
<rect x="187.16" y="380.03" width="6.82" height="5.53" fill="#9edae5"/>
<rect x="193.38" y="380.03" width="13.04" height="5.53" fill="#2ca02c"/>
<rect x="205.82" y="380.03" width="6.82" height="5.53" fill="#bcbd22"/>
<rect x="212.04" y="380.03" width="6.82" height="5.53" fill="#d62728"/>
<rect x="218.26" y="380.03" width="6.82" height="5.53" fill="#9edae5"/>
<rect x="224.48" y="380.03" width="6.82" height="5.53" fill="#5254a3"/>
<rect x="230.70" y="380.03" width="6.82" height="5.53" fill="#1f77b4"/>
<rect x="236.92" y="380.03" width="6.82" height="5.53" fill="#ff9896"/>
<rect x="243.14" y="380.03" width="6.82" height="5.53" fill="#9467bd"/>
<rect x="249.36" y="380.03" width="6.82" height="5.53" fill="#bcbd22"/>
<rect x="255.58" y="380.03" width="6.82" height="5.53" fill="#aec7e8"/>
<rect x="261.80" y="380.03" width="6.82" height="5.53" fill="#98df8a"/>
<rect x="268.02" y="380.03" width="6.82" height="5.53" fill="#ff7f0e"/>
<rect x="274.24" y="380.03" width="6.82" height="5.53" fill="#393b79"/>
<rect x="280.46" y="380.03" width="6.82" height="5.53" fill="#9467bd"/>
<rect x="286.68" y="380.03" width="6.82" height="5.53" fill="#aec7e8"/>
<rect x="292.90" y="380.03" width="6.82" height="5.53" fill="#dbdb8d"/>
<rect x="299.12" y="380.03" width="13.04" height="5.53" fill="#8c564b"/>
<rect x="311.56" y="380.03" width="6.82" height="5.53" fill="#17becf"/>
<rect x="317.78" y="380.03" width="6.82" height="5.53" fill="#9467bd"/>
<rect x="324.00" y="380.03" width="6.82" height="5.53" fill="#f7b6d2"/>
<rect x="330.22" y="380.03" width="6.82" height="5.53" fill="#7f7f7f"/>
<rect x="336.44" y="380.03" width="6.82" height="5.53" fill="#e377c2"/>
<rect x="342.66" y="380.03" width="6.82" height="5.53" fill="#7f7f7f"/>
<rect x="348.88" y="380.03" width="6.82" height="5.53" fill="#8c564b"/>
<rect x="355.10" y="380.03" width="6.82" height="5.53" fill="#e377c2"/>
<rect x="361.32" y="380.03" width="6.82" height="5.53" fill="#c7c7c7"/>
<rect x="367.54" y="380.03" width="19.26" height="5.53" fill="#8c564b"/>
<rect x="386.20" y="380.03" width="6.22" height="5.53" fill="#c7c7c7"/>
<rect x="75.20" y="385.86" width="13.04" height="5.53" fill="#b15928"/>
<rect x="87.64" y="385.86" width="6.82" height="5.53" fill="#a6cee3"/>
<rect x="93.86" y="385.86" width="25.48" height="5.53" fill="#b15928"/>
<rect x="118.74" y="385.86" width="6.82" height="5.53" fill="#33a02c"/>
<rect x="124.96" y="385.86" width="6.82" height="5.53" fill="#fb9a99"/>
<rect x="131.18" y="385.86" width="13.04" height="5.53" fill="#b15928"/>
<rect x="143.62" y="385.86" width="6.82" height="5.53" fill="#1f78b4"/>
<rect x="149.84" y="385.86" width="6.82" height="5.53" fill="#33a02c"/>
<rect x="156.06" y="385.86" width="6.82" height="5.53" fill="#ffff99"/>
<rect x="162.28" y="385.86" width="6.82" height="5.53" fill="#fdbf6f"/>
<rect x="168.50" y="385.86" width="6.82" height="5.53" fill="#fb9a99"/>
<rect x="174.72" y="385.86" width="6.82" height="5.53" fill="#ff7f00"/>
<rect x="180.94" y="385.86" width="6.82" height="5.53" fill="#cab2d6"/>
<rect x="187.16" y="385.86" width="6.82" height="5.53" fill="#b15928"/>
<rect x="193.38" y="385.86" width="13.04" height="5.53" fill="#e31a1c"/>
<rect x="205.82" y="385.86" width="6.82" height="5.53" fill="#ffff99"/>
<rect x="212.04" y="385.86" width="6.82" height="5.53" fill="#ff7f00"/>
<rect x="218.26" y="385.86" width="13.04" height="5.53" fill="#b15928"/>
<rect x="230.70" y="385.86" width="6.82" height="5.53" fill="#1f78b4"/>
<rect x="236.92" y="385.86" width="6.82" height="5.53" fill="#cab2d6"/>
<rect x="243.14" y="385.86" width="6.82" height="5.53" fill="#6a3d9a"/>
<rect x="249.36" y="385.86" width="6.82" height="5.53" fill="#ffff99"/>
<rect x="255.58" y="385.86" width="6.82" height="5.53" fill="#b2df8a"/>
<rect x="261.80" y="385.86" width="6.82" height="5.53" fill="#fdbf6f"/>
<rect x="268.02" y="385.86" width="6.82" height="5.53" fill="#33a02c"/>
<rect x="274.24" y="385.86" width="6.82" height="5.53" fill="#ffff99"/>
<rect x="280.46" y="385.86" width="6.82" height="5.53" fill="#6a3d9a"/>
<rect x="286.68" y="385.86" width="6.82" height="5.53" fill="#b2df8a"/>
<rect x="292.90" y="385.86" width="19.26" height="5.53" fill="#b15928"/>
<rect x="311.56" y="385.86" width="6.82" height="5.53" fill="#ffff99"/>
<rect x="317.78" y="385.86" width="6.82" height="5.53" fill="#6a3d9a"/>
<rect x="324.00" y="385.86" width="68.42" height="5.53" fill="#b15928"/>
<rect x="75.20" y="391.69" width="6.82" height="5.53" fill="#b2df8a"/>
<rect x="81.42" y="391.69" width="6.82" height="5.53" fill="#1f78b4"/>
<rect x="87.64" y="391.69" width="6.82" height="5.53" fill="#b2df8a"/>
<rect x="93.86" y="391.69" width="13.04" height="5.53" fill="#ff7f00"/>
<rect x="106.30" y="391.69" width="6.82" height="5.53" fill="#1f78b4"/>
<rect x="112.52" y="391.69" width="6.82" height="5.53" fill="#a6cee3"/>
<rect x="118.74" y="391.69" width="6.82" height="5.53" fill="#cab2d6"/>
<rect x="124.96" y="391.69" width="180.98" height="5.53" fill="#fb9a99"/>
<rect x="305.34" y="391.69" width="6.82" height="5.53" fill="#e31a1c"/>
<rect x="311.56" y="391.69" width="19.26" height="5.53" fill="#cab2d6"/>
<rect x="330.22" y="391.69" width="6.82" height="5.53" fill="#fdbf6f"/>
<rect x="336.44" y="391.69" width="6.82" height="5.53" fill="#33a02c"/>
<rect x="342.66" y="391.69" width="6.82" height="5.53" fill="#1f78b4"/>
<rect x="348.88" y="391.69" width="6.82" height="5.53" fill="#a6cee3"/>
<rect x="355.10" y="391.69" width="6.82" height="5.53" fill="#33a02c"/>
<rect x="361.32" y="391.69" width="6.82" height="5.53" fill="#b2df8a"/>
<rect x="367.54" y="391.69" width="6.82" height="5.53" fill="#e31a1c"/>
<rect x="373.76" y="391.69" width="6.82" height="5.53" fill="#1f78b4"/>
<rect x="379.98" y="391.69" width="6.82" height="5.53" fill="#fb9a99"/>
<rect x="386.20" y="391.69" width="6.22" height="5.53" fill="#b2df8a"/>
<rect x="75.20" y="397.52" width="6.82" height="5.53" fill="#5fc8ff"/>
<rect x="81.42" y="397.52" width="13.04" height="5.53" fill="#cab2d6"/>
<rect x="93.86" y="397.52" width="6.82" height="5.53" fill="#5fc8ff"/>
<rect x="100.08" y="397.52" width="6.82" height="5.53" fill="#ff99ff"/>
<rect x="106.30" y="397.52" width="6.82" height="5.53" fill="#5fc8ff"/>
<rect x="112.52" y="397.52" width="13.04" height="5.53" fill="#cab2d6"/>
<rect x="124.96" y="397.52" width="13.04" height="5.53" fill="#ff99ff"/>
<rect x="137.40" y="397.52" width="13.04" height="5.53" fill="#5fc8ff"/>
<rect x="149.84" y="397.52" width="19.26" height="5.53" fill="#ff99ff"/>
<rect x="168.50" y="397.52" width="25.48" height="5.53" fill="#5fc8ff"/>
<rect x="193.38" y="397.52" width="6.82" height="5.53" fill="#ff99ff"/>
<rect x="199.60" y="397.52" width="6.82" height="5.53" fill="#5fc8ff"/>
<rect x="205.82" y="397.52" width="44.14" height="5.53" fill="#ff99ff"/>
<rect x="249.36" y="397.52" width="37.92" height="5.53" fill="#5fc8ff"/>
<rect x="286.68" y="397.52" width="6.82" height="5.53" fill="#ff99ff"/>
<rect x="292.90" y="397.52" width="19.26" height="5.53" fill="#5fc8ff"/>
<rect x="311.56" y="397.52" width="19.26" height="5.53" fill="#cab2d6"/>
<rect x="330.22" y="397.52" width="19.26" height="5.53" fill="#5fc8ff"/>
<rect x="348.88" y="397.52" width="6.82" height="5.53" fill="#cab2d6"/>
<rect x="355.10" y="397.52" width="37.32" height="5.53" fill="#5fc8ff"/>
<rect x="75.20" y="403.35" width="6.82" height="5.53" fill="#ffff99"/>
<rect x="81.42" y="403.35" width="6.82" height="5.53" fill="#b2df8a"/>
<rect x="87.64" y="403.35" width="6.82" height="5.53" fill="#a6cee3"/>
<rect x="93.86" y="403.35" width="13.04" height="5.53" fill="#1f78b4"/>
<rect x="106.30" y="403.35" width="6.82" height="5.53" fill="#33a02c"/>
<rect x="112.52" y="403.35" width="6.82" height="5.53" fill="#cab2d6"/>
<rect x="118.74" y="403.35" width="6.82" height="5.53" fill="#ff7f00"/>
<rect x="124.96" y="403.35" width="174.76" height="5.53" fill="#6a3d9a"/>
<rect x="299.12" y="403.35" width="13.04" height="5.53" fill="#fb9a99"/>
<rect x="311.56" y="403.35" width="19.26" height="5.53" fill="#ff7f00"/>
<rect x="330.22" y="403.35" width="6.82" height="5.53" fill="#b15928"/>
<rect x="336.44" y="403.35" width="6.82" height="5.53" fill="#e31a1c"/>
<rect x="342.66" y="403.35" width="6.82" height="5.53" fill="#33a02c"/>
<rect x="348.88" y="403.35" width="6.82" height="5.53" fill="#cab2d6"/>
<rect x="355.10" y="403.35" width="6.82" height="5.53" fill="#fdbf6f"/>
<rect x="361.32" y="403.35" width="6.82" height="5.53" fill="#ffff99"/>
<rect x="367.54" y="403.35" width="19.26" height="5.53" fill="#fb9a99"/>
<rect x="386.20" y="403.35" width="6.22" height="5.53" fill="#ffff99"/>
<rect x="75.20" y="412.10" width="13.04" height="6.81" fill="#0d58ae"/>
<rect x="87.64" y="412.10" width="6.82" height="6.81" fill="#00006c"/>
<rect x="93.86" y="412.10" width="13.04" height="6.81" fill="#2886de"/>
<rect x="106.30" y="412.10" width="6.82" height="6.81" fill="#1e78d0"/>
<rect x="112.52" y="412.10" width="6.82" height="6.81" fill="#2886de"/>
<rect x="118.74" y="412.10" width="6.82" height="6.81" fill="#0d58ae"/>
<rect x="124.96" y="412.10" width="6.82" height="6.81" fill="#000000"/>
<rect x="131.18" y="412.10" width="6.82" height="6.81" fill="#0d58ae"/>
<rect x="137.40" y="412.10" width="6.82" height="6.81" fill="#2886de"/>
<rect x="143.62" y="412.10" width="13.04" height="6.81" fill="#000000"/>
<rect x="156.06" y="412.10" width="6.82" height="6.81" fill="#00006c"/>
<rect x="162.28" y="412.10" width="25.48" height="6.81" fill="#000000"/>
<rect x="187.16" y="412.10" width="6.82" height="6.81" fill="#2886de"/>
<rect x="193.38" y="412.10" width="13.04" height="6.81" fill="#000000"/>
<rect x="205.82" y="412.10" width="6.82" height="6.81" fill="#000040"/>
<rect x="212.04" y="412.10" width="6.82" height="6.81" fill="#000000"/>
<rect x="218.26" y="412.10" width="13.04" height="6.81" fill="#2886de"/>
<rect x="230.70" y="412.10" width="19.26" height="6.81" fill="#000000"/>
<rect x="249.36" y="412.10" width="6.82" height="6.81" fill="#000040"/>
<rect x="255.58" y="412.10" width="19.26" height="6.81" fill="#000000"/>
<rect x="274.24" y="412.10" width="6.82" height="6.81" fill="#000040"/>
<rect x="280.46" y="412.10" width="13.04" height="6.81" fill="#000000"/>
<rect x="292.90" y="412.10" width="6.82" height="6.81" fill="#1468c0"/>
<rect x="299.12" y="412.10" width="13.04" height="6.81" fill="#2886de"/>
<rect x="311.56" y="412.10" width="6.82" height="6.81" fill="#1e78d0"/>
<rect x="317.78" y="412.10" width="6.82" height="6.81" fill="#2886de"/>
<rect x="324.00" y="412.10" width="6.82" height="6.81" fill="#e4e3e1"/>
<rect x="330.22" y="412.10" width="6.82" height="6.81" fill="#1e78d0"/>
<rect x="336.44" y="412.10" width="6.82" height="6.81" fill="#2886de"/>
<rect x="342.66" y="412.10" width="6.82" height="6.81" fill="#00006c"/>
<rect x="348.88" y="412.10" width="19.26" height="6.81" fill="#0d58ae"/>
<rect x="367.54" y="412.10" width="6.82" height="6.81" fill="#2886de"/>
<rect x="373.76" y="412.10" width="6.82" height="6.81" fill="#00006c"/>
<rect x="379.98" y="412.10" width="6.82" height="6.81" fill="#1e78d0"/>
<rect x="386.20" y="412.10" width="6.22" height="6.81" fill="#0d58ae"/>
<rect x="75.20" y="418.31" width="6.82" height="6.81" fill="#06248c"/>
<rect x="81.42" y="418.31" width="6.82" height="6.81" fill="#389af0"/>
<rect x="87.64" y="418.31" width="6.82" height="6.81" fill="#0d58ae"/>
<rect x="93.86" y="418.31" width="25.48" height="6.81" fill="#000000"/>
<rect x="118.74" y="418.31" width="6.82" height="6.81" fill="#1e78d0"/>
<rect x="124.96" y="418.31" width="6.82" height="6.81" fill="#1468c0"/>
<rect x="131.18" y="418.31" width="13.04" height="6.81" fill="#000000"/>
<rect x="143.62" y="418.31" width="6.82" height="6.81" fill="#1468c0"/>
<rect x="149.84" y="418.31" width="6.82" height="6.81" fill="#0d58ae"/>
<rect x="156.06" y="418.31" width="6.82" height="6.81" fill="#00006c"/>
<rect x="162.28" y="418.31" width="19.26" height="6.81" fill="#1468c0"/>
<rect x="180.94" y="418.31" width="6.82" height="6.81" fill="#00006c"/>
<rect x="187.16" y="418.31" width="6.82" height="6.81" fill="#000000"/>
<rect x="193.38" y="418.31" width="13.04" height="6.81" fill="#1468c0"/>
<rect x="205.82" y="418.31" width="6.82" height="6.81" fill="#000040"/>
<rect x="212.04" y="418.31" width="6.82" height="6.81" fill="#0d58ae"/>
<rect x="218.26" y="418.31" width="13.04" height="6.81" fill="#000000"/>
<rect x="230.70" y="418.31" width="6.82" height="6.81" fill="#1468c0"/>
<rect x="236.92" y="418.31" width="6.82" height="6.81" fill="#06248c"/>
<rect x="243.14" y="418.31" width="6.82" height="6.81" fill="#00006c"/>
<rect x="249.36" y="418.31" width="6.82" height="6.81" fill="#000040"/>
<rect x="255.58" y="418.31" width="19.26" height="6.81" fill="#1468c0"/>
<rect x="274.24" y="418.31" width="6.82" height="6.81" fill="#000040"/>
<rect x="280.46" y="418.31" width="6.82" height="6.81" fill="#00006c"/>
<rect x="286.68" y="418.31" width="6.82" height="6.81" fill="#0d58ae"/>
<rect x="292.90" y="418.31" width="6.82" height="6.81" fill="#000000"/>
<rect x="299.12" y="418.31" width="13.04" height="6.81" fill="#0d58ae"/>
<rect x="311.56" y="418.31" width="6.82" height="6.81" fill="#000040"/>
<rect x="317.78" y="418.31" width="6.82" height="6.81" fill="#00006c"/>
<rect x="324.00" y="418.31" width="13.04" height="6.81" fill="#000000"/>
<rect x="336.44" y="418.31" width="6.82" height="6.81" fill="#000040"/>
<rect x="342.66" y="418.31" width="49.76" height="6.81" fill="#2886de"/>
<rect x="75.20" y="424.52" width="6.82" height="6.81" fill="#0d58ae"/>
<rect x="81.42" y="424.52" width="6.82" height="6.81" fill="#00006c"/>
<rect x="87.64" y="424.52" width="6.82" height="6.81" fill="#0d58ae"/>
<rect x="93.86" y="424.52" width="25.48" height="6.81" fill="#2886de"/>
<rect x="118.74" y="424.52" width="6.82" height="6.81" fill="#0d58ae"/>
<rect x="124.96" y="424.52" width="6.82" height="6.81" fill="#0a3e9e"/>
<rect x="131.18" y="424.52" width="13.04" height="6.81" fill="#2886de"/>
<rect x="143.62" y="424.52" width="13.04" height="6.81" fill="#0d58ae"/>
<rect x="156.06" y="424.52" width="6.82" height="6.81" fill="#1468c0"/>
<rect x="162.28" y="424.52" width="6.82" height="6.81" fill="#0a3e9e"/>
<rect x="168.50" y="424.52" width="13.04" height="6.81" fill="#0d58ae"/>
<rect x="180.94" y="424.52" width="6.82" height="6.81" fill="#1468c0"/>
<rect x="187.16" y="424.52" width="6.82" height="6.81" fill="#2886de"/>
<rect x="193.38" y="424.52" width="6.82" height="6.81" fill="#0a3e9e"/>
<rect x="199.60" y="424.52" width="6.82" height="6.81" fill="#0d58ae"/>
<rect x="205.82" y="424.52" width="13.04" height="6.81" fill="#1468c0"/>
<rect x="218.26" y="424.52" width="13.04" height="6.81" fill="#2886de"/>
<rect x="230.70" y="424.52" width="6.82" height="6.81" fill="#0d58ae"/>
<rect x="236.92" y="424.52" width="19.26" height="6.81" fill="#1468c0"/>
<rect x="255.58" y="424.52" width="6.82" height="6.81" fill="#0d58ae"/>
<rect x="261.80" y="424.52" width="6.82" height="6.81" fill="#06248c"/>
<rect x="268.02" y="424.52" width="19.26" height="6.81" fill="#1468c0"/>
<rect x="286.68" y="424.52" width="6.82" height="6.81" fill="#06248c"/>
<rect x="292.90" y="424.52" width="13.04" height="6.81" fill="#1e78d0"/>
<rect x="305.34" y="424.52" width="6.82" height="6.81" fill="#2886de"/>
<rect x="311.56" y="424.52" width="13.04" height="6.81" fill="#1468c0"/>
<rect x="324.00" y="424.52" width="19.26" height="6.81" fill="#2886de"/>
<rect x="342.66" y="424.52" width="6.82" height="6.81" fill="#00006c"/>
<rect x="348.88" y="424.52" width="6.82" height="6.81" fill="#06248c"/>
<rect x="355.10" y="424.52" width="6.82" height="6.81" fill="#00006c"/>
<rect x="361.32" y="424.52" width="6.82" height="6.81" fill="#0d58ae"/>
<rect x="367.54" y="424.52" width="6.82" height="6.81" fill="#0a3e9e"/>
<rect x="373.76" y="424.52" width="13.04" height="6.81" fill="#000040"/>
<rect x="386.20" y="424.52" width="6.22" height="6.81" fill="#1468c0"/>
<rect x="75.20" y="430.73" width="6.82" height="6.81" fill="#0d58ae"/>
<rect x="81.42" y="430.73" width="6.82" height="6.81" fill="#1e78d0"/>
<rect x="87.64" y="430.73" width="6.82" height="6.81" fill="#06248c"/>
<rect x="93.86" y="430.73" width="13.04" height="6.81" fill="#1e78d0"/>
<rect x="106.30" y="430.73" width="6.82" height="6.81" fill="#1468c0"/>
<rect x="112.52" y="430.73" width="6.82" height="6.81" fill="#1e78d0"/>
<rect x="118.74" y="430.73" width="6.82" height="6.81" fill="#000040"/>
<rect x="124.96" y="430.73" width="6.82" height="6.81" fill="#06248c"/>
<rect x="131.18" y="430.73" width="13.04" height="6.81" fill="#1e78d0"/>
<rect x="143.62" y="430.73" width="6.82" height="6.81" fill="#0d58ae"/>
<rect x="149.84" y="430.73" width="6.82" height="6.81" fill="#0a3e9e"/>
<rect x="156.06" y="430.73" width="6.82" height="6.81" fill="#1468c0"/>
<rect x="162.28" y="430.73" width="6.82" height="6.81" fill="#06248c"/>
<rect x="168.50" y="430.73" width="6.82" height="6.81" fill="#0d58ae"/>
<rect x="174.72" y="430.73" width="6.82" height="6.81" fill="#0a3e9e"/>
<rect x="180.94" y="430.73" width="6.82" height="6.81" fill="#0d58ae"/>
<rect x="187.16" y="430.73" width="6.82" height="6.81" fill="#1e78d0"/>
<rect x="193.38" y="430.73" width="13.04" height="6.81" fill="#06248c"/>
<rect x="205.82" y="430.73" width="13.04" height="6.81" fill="#0d58ae"/>
<rect x="218.26" y="430.73" width="13.04" height="6.81" fill="#1e78d0"/>
<rect x="230.70" y="430.73" width="6.82" height="6.81" fill="#06248c"/>
<rect x="236.92" y="430.73" width="19.26" height="6.81" fill="#0d58ae"/>
<rect x="255.58" y="430.73" width="19.26" height="6.81" fill="#06248c"/>
<rect x="274.24" y="430.73" width="13.04" height="6.81" fill="#0d58ae"/>
<rect x="286.68" y="430.73" width="6.82" height="6.81" fill="#0a3e9e"/>
<rect x="292.90" y="430.73" width="13.04" height="6.81" fill="#1468c0"/>
<rect x="305.34" y="430.73" width="6.82" height="6.81" fill="#1e78d0"/>
<rect x="311.56" y="430.73" width="6.82" height="6.81" fill="#00006c"/>
<rect x="317.78" y="430.73" width="6.82" height="6.81" fill="#000040"/>
<rect x="324.00" y="430.73" width="6.82" height="6.81" fill="#0d58ae"/>
<rect x="330.22" y="430.73" width="6.82" height="6.81" fill="#1e78d0"/>
<rect x="336.44" y="430.73" width="6.82" height="6.81" fill="#1468c0"/>
<rect x="342.66" y="430.73" width="19.26" height="6.81" fill="#0d58ae"/>
<rect x="361.32" y="430.73" width="6.82" height="6.81" fill="#1468c0"/>
<rect x="367.54" y="430.73" width="24.88" height="6.81" fill="#0d58ae"/>
<rect x="75.20" y="436.94" width="6.82" height="6.81" fill="#0a3e9e"/>
<rect x="81.42" y="436.94" width="6.82" height="6.81" fill="#0d58ae"/>
<rect x="87.64" y="436.94" width="6.82" height="6.81" fill="#000040"/>
<rect x="93.86" y="436.94" width="13.04" height="6.81" fill="#1e78d0"/>
<rect x="106.30" y="436.94" width="6.82" height="6.81" fill="#1468c0"/>
<rect x="112.52" y="436.94" width="6.82" height="6.81" fill="#1e78d0"/>
<rect x="118.74" y="436.94" width="6.82" height="6.81" fill="#000040"/>
<rect x="124.96" y="436.94" width="6.82" height="6.81" fill="#00006c"/>
<rect x="131.18" y="436.94" width="13.04" height="6.81" fill="#1e78d0"/>
<rect x="143.62" y="436.94" width="6.82" height="6.81" fill="#06248c"/>
<rect x="149.84" y="436.94" width="6.82" height="6.81" fill="#000040"/>
<rect x="156.06" y="436.94" width="6.82" height="6.81" fill="#1468c0"/>
<rect x="162.28" y="436.94" width="13.04" height="6.81" fill="#00006c"/>
<rect x="174.72" y="436.94" width="6.82" height="6.81" fill="#06248c"/>
<rect x="180.94" y="436.94" width="6.82" height="6.81" fill="#0d58ae"/>
<rect x="187.16" y="436.94" width="6.82" height="6.81" fill="#1468c0"/>
<rect x="193.38" y="436.94" width="13.04" height="6.81" fill="#00006c"/>
<rect x="205.82" y="436.94" width="6.82" height="6.81" fill="#1468c0"/>
<rect x="212.04" y="436.94" width="6.82" height="6.81" fill="#06248c"/>
<rect x="218.26" y="436.94" width="13.04" height="6.81" fill="#1468c0"/>
<rect x="230.70" y="436.94" width="6.82" height="6.81" fill="#000040"/>
<rect x="236.92" y="436.94" width="13.04" height="6.81" fill="#0d58ae"/>
<rect x="249.36" y="436.94" width="6.82" height="6.81" fill="#1468c0"/>
<rect x="255.58" y="436.94" width="13.04" height="6.81" fill="#000040"/>
<rect x="268.02" y="436.94" width="6.82" height="6.81" fill="#00006c"/>
<rect x="274.24" y="436.94" width="6.82" height="6.81" fill="#1468c0"/>
<rect x="280.46" y="436.94" width="6.82" height="6.81" fill="#0d58ae"/>
<rect x="286.68" y="436.94" width="6.82" height="6.81" fill="#000040"/>
<rect x="292.90" y="436.94" width="13.04" height="6.81" fill="#1e78d0"/>
<rect x="305.34" y="436.94" width="6.82" height="6.81" fill="#2886de"/>
<rect x="311.56" y="436.94" width="6.82" height="6.81" fill="#1e78d0"/>
<rect x="317.78" y="436.94" width="25.48" height="6.81" fill="#1468c0"/>
<rect x="342.66" y="436.94" width="6.82" height="6.81" fill="#0d58ae"/>
<rect x="348.88" y="436.94" width="6.82" height="6.81" fill="#06248c"/>
<rect x="355.10" y="436.94" width="13.04" height="6.81" fill="#0d58ae"/>
<rect x="367.54" y="436.94" width="6.82" height="6.81" fill="#1468c0"/>
<rect x="373.76" y="436.94" width="18.66" height="6.81" fill="#0d58ae"/>
<rect x="75.20" y="443.15" width="13.04" height="6.81" fill="#0d58ae"/>
<rect x="87.64" y="443.15" width="6.82" height="6.81" fill="#0a3e9e"/>
<rect x="93.86" y="443.15" width="25.48" height="6.81" fill="#000040"/>
<rect x="118.74" y="443.15" width="6.82" height="6.81" fill="#00006c"/>
<rect x="124.96" y="443.15" width="6.82" height="6.81" fill="#0a3e9e"/>
<rect x="131.18" y="443.15" width="13.04" height="6.81" fill="#000040"/>
<rect x="143.62" y="443.15" width="6.82" height="6.81" fill="#1468c0"/>
<rect x="149.84" y="443.15" width="6.82" height="6.81" fill="#06248c"/>
<rect x="156.06" y="443.15" width="6.82" height="6.81" fill="#00006c"/>
<rect x="162.28" y="443.15" width="6.82" height="6.81" fill="#0a3e9e"/>
<rect x="168.50" y="443.15" width="6.82" height="6.81" fill="#1468c0"/>
<rect x="174.72" y="443.15" width="6.82" height="6.81" fill="#06248c"/>
<rect x="180.94" y="443.15" width="13.04" height="6.81" fill="#00006c"/>
<rect x="193.38" y="443.15" width="6.82" height="6.81" fill="#0d58ae"/>
<rect x="199.60" y="443.15" width="6.82" height="6.81" fill="#06248c"/>
<rect x="205.82" y="443.15" width="6.82" height="6.81" fill="#000040"/>
<rect x="212.04" y="443.15" width="13.04" height="6.81" fill="#00006c"/>
<rect x="224.48" y="443.15" width="6.82" height="6.81" fill="#000040"/>
<rect x="230.70" y="443.15" width="6.82" height="6.81" fill="#0d58ae"/>
<rect x="236.92" y="443.15" width="19.26" height="6.81" fill="#000040"/>
<rect x="255.58" y="443.15" width="19.26" height="6.81" fill="#0a3e9e"/>
<rect x="274.24" y="443.15" width="13.04" height="6.81" fill="#000040"/>
<rect x="286.68" y="443.15" width="6.82" height="6.81" fill="#0a3e9e"/>
<rect x="292.90" y="443.15" width="25.48" height="6.81" fill="#00006c"/>
<rect x="317.78" y="443.15" width="6.82" height="6.81" fill="#000040"/>
<rect x="324.00" y="443.15" width="6.82" height="6.81" fill="#00006c"/>
<rect x="330.22" y="443.15" width="6.82" height="6.81" fill="#06248c"/>
<rect x="336.44" y="443.15" width="6.82" height="6.81" fill="#0a3e9e"/>
<rect x="342.66" y="443.15" width="31.70" height="6.81" fill="#2886de"/>
<rect x="373.76" y="443.15" width="18.66" height="6.81" fill="#1e78d0"/>
<rect x="75.20" y="449.36" width="6.82" height="6.81" fill="#0a3e9e"/>
<rect x="81.42" y="449.36" width="6.82" height="6.81" fill="#0d58ae"/>
<rect x="87.64" y="449.36" width="6.82" height="6.81" fill="#06248c"/>
<rect x="93.86" y="449.36" width="25.48" height="6.81" fill="#00006c"/>
<rect x="118.74" y="449.36" width="6.82" height="6.81" fill="#1468c0"/>
<rect x="124.96" y="449.36" width="6.82" height="6.81" fill="#0a3e9e"/>
<rect x="131.18" y="449.36" width="13.04" height="6.81" fill="#00006c"/>
<rect x="143.62" y="449.36" width="6.82" height="6.81" fill="#1468c0"/>
<rect x="149.84" y="449.36" width="6.82" height="6.81" fill="#06248c"/>
<rect x="156.06" y="449.36" width="6.82" height="6.81" fill="#00006c"/>
<rect x="162.28" y="449.36" width="6.82" height="6.81" fill="#0a3e9e"/>
<rect x="168.50" y="449.36" width="6.82" height="6.81" fill="#0d58ae"/>
<rect x="174.72" y="449.36" width="6.82" height="6.81" fill="#0a3e9e"/>
<rect x="180.94" y="449.36" width="13.04" height="6.81" fill="#00006c"/>
<rect x="193.38" y="449.36" width="6.82" height="6.81" fill="#0d58ae"/>
<rect x="199.60" y="449.36" width="6.82" height="6.81" fill="#06248c"/>
<rect x="205.82" y="449.36" width="6.82" height="6.81" fill="#00006c"/>
<rect x="212.04" y="449.36" width="6.82" height="6.81" fill="#06248c"/>
<rect x="218.26" y="449.36" width="13.04" height="6.81" fill="#00006c"/>
<rect x="230.70" y="449.36" width="6.82" height="6.81" fill="#0d58ae"/>
<rect x="236.92" y="449.36" width="19.26" height="6.81" fill="#00006c"/>
<rect x="255.58" y="449.36" width="6.82" height="6.81" fill="#0d58ae"/>
<rect x="261.80" y="449.36" width="13.04" height="6.81" fill="#0a3e9e"/>
<rect x="274.24" y="449.36" width="13.04" height="6.81" fill="#00006c"/>
<rect x="286.68" y="449.36" width="6.82" height="6.81" fill="#0d58ae"/>
<rect x="292.90" y="449.36" width="6.82" height="6.81" fill="#00006c"/>
<rect x="299.12" y="449.36" width="6.82" height="6.81" fill="#0a3e9e"/>
<rect x="305.34" y="449.36" width="6.82" height="6.81" fill="#0d58ae"/>
<rect x="311.56" y="449.36" width="6.82" height="6.81" fill="#000000"/>
<rect x="317.78" y="449.36" width="13.04" height="6.81" fill="#0d58ae"/>
<rect x="330.22" y="449.36" width="6.82" height="6.81" fill="#06248c"/>
<rect x="336.44" y="449.36" width="6.82" height="6.81" fill="#0d58ae"/>
<rect x="342.66" y="449.36" width="31.70" height="6.81" fill="#2886de"/>
<rect x="373.76" y="449.36" width="13.04" height="6.81" fill="#1e78d0"/>
<rect x="386.20" y="449.36" width="6.22" height="6.81" fill="#1468c0"/>
<rect x="75.20" y="455.57" width="6.82" height="6.81" fill="#2886de"/>
<rect x="81.42" y="455.57" width="6.82" height="6.81" fill="#b9dcf5"/>
<rect x="87.64" y="455.57" width="6.82" height="6.81" fill="#1468c0"/>
<rect x="93.86" y="455.57" width="13.04" height="6.81" fill="#1e78d0"/>
<rect x="106.30" y="455.57" width="6.82" height="6.81" fill="#1468c0"/>
<rect x="112.52" y="455.57" width="13.04" height="6.81" fill="#1e78d0"/>
<rect x="124.96" y="455.57" width="19.26" height="6.81" fill="#1468c0"/>
<rect x="143.62" y="455.57" width="6.82" height="6.81" fill="#2886de"/>
<rect x="149.84" y="455.57" width="6.82" height="6.81" fill="#1e78d0"/>
<rect x="156.06" y="455.57" width="6.82" height="6.81" fill="#1468c0"/>
<rect x="162.28" y="455.57" width="19.26" height="6.81" fill="#1e78d0"/>
<rect x="180.94" y="455.57" width="13.04" height="6.81" fill="#1468c0"/>
<rect x="193.38" y="455.57" width="6.82" height="6.81" fill="#1e78d0"/>
<rect x="199.60" y="455.57" width="19.26" height="6.81" fill="#1468c0"/>
<rect x="218.26" y="455.57" width="19.26" height="6.81" fill="#1e78d0"/>
<rect x="236.92" y="455.57" width="19.26" height="6.81" fill="#1468c0"/>
<rect x="255.58" y="455.57" width="19.26" height="6.81" fill="#1e78d0"/>
<rect x="274.24" y="455.57" width="13.04" height="6.81" fill="#1468c0"/>
<rect x="286.68" y="455.57" width="6.82" height="6.81" fill="#1e78d0"/>
<rect x="292.90" y="455.57" width="6.82" height="6.81" fill="#1468c0"/>
<rect x="299.12" y="455.57" width="13.04" height="6.81" fill="#1e78d0"/>
<rect x="311.56" y="455.57" width="6.82" height="6.81" fill="#0a3e9e"/>
<rect x="317.78" y="455.57" width="6.82" height="6.81" fill="#00006c"/>
<rect x="324.00" y="455.57" width="6.82" height="6.81" fill="#1468c0"/>
<rect x="330.22" y="455.57" width="6.82" height="6.81" fill="#1e78d0"/>
<rect x="336.44" y="455.57" width="6.82" height="6.81" fill="#1468c0"/>
<rect x="342.66" y="455.57" width="6.82" height="6.81" fill="#389af0"/>
<rect x="348.88" y="455.57" width="6.82" height="6.81" fill="#52b2fc"/>
<rect x="355.10" y="455.57" width="13.04" height="6.81" fill="#389af0"/>
<rect x="367.54" y="455.57" width="6.82" height="6.81" fill="#52b2fc"/>
<rect x="373.76" y="455.57" width="13.04" height="6.81" fill="#389af0"/>
<rect x="386.20" y="455.57" width="6.22" height="6.81" fill="#52b2fc"/>
<rect x="75.20" y="461.78" width="6.82" height="6.81" fill="#1e78d0"/>
<rect x="81.42" y="461.78" width="6.82" height="6.81" fill="#389af0"/>
<rect x="87.64" y="461.78" width="6.82" height="6.81" fill="#1e78d0"/>
<rect x="93.86" y="461.78" width="25.48" height="6.81" fill="#1468c0"/>
<rect x="118.74" y="461.78" width="13.04" height="6.81" fill="#1e78d0"/>
<rect x="131.18" y="461.78" width="13.04" height="6.81" fill="#0d58ae"/>
<rect x="143.62" y="461.78" width="6.82" height="6.81" fill="#2886de"/>
<rect x="149.84" y="461.78" width="6.82" height="6.81" fill="#1e78d0"/>
<rect x="156.06" y="461.78" width="6.82" height="6.81" fill="#0d58ae"/>
<rect x="162.28" y="461.78" width="19.26" height="6.81" fill="#1e78d0"/>
<rect x="180.94" y="461.78" width="6.82" height="6.81" fill="#1468c0"/>
<rect x="187.16" y="461.78" width="6.82" height="6.81" fill="#0d58ae"/>
<rect x="193.38" y="461.78" width="6.82" height="6.81" fill="#2886de"/>
<rect x="199.60" y="461.78" width="6.82" height="6.81" fill="#1e78d0"/>
<rect x="205.82" y="461.78" width="6.82" height="6.81" fill="#0d58ae"/>
<rect x="212.04" y="461.78" width="13.04" height="6.81" fill="#1468c0"/>
<rect x="224.48" y="461.78" width="6.82" height="6.81" fill="#0d58ae"/>
<rect x="230.70" y="461.78" width="6.82" height="6.81" fill="#2886de"/>
<rect x="236.92" y="461.78" width="13.04" height="6.81" fill="#1468c0"/>
<rect x="249.36" y="461.78" width="6.82" height="6.81" fill="#0d58ae"/>
<rect x="255.58" y="461.78" width="19.26" height="6.81" fill="#2886de"/>
<rect x="274.24" y="461.78" width="13.04" height="6.81" fill="#1468c0"/>
<rect x="286.68" y="461.78" width="6.82" height="6.81" fill="#2886de"/>
<rect x="292.90" y="461.78" width="6.82" height="6.81" fill="#0d58ae"/>
<rect x="299.12" y="461.78" width="6.82" height="6.81" fill="#1468c0"/>
<rect x="305.34" y="461.78" width="6.82" height="6.81" fill="#0d58ae"/>
<rect x="311.56" y="461.78" width="6.82" height="6.81" fill="#000040"/>
<rect x="317.78" y="461.78" width="6.82" height="6.81" fill="#06248c"/>
<rect x="324.00" y="461.78" width="6.82" height="6.81" fill="#00006c"/>
<rect x="330.22" y="461.78" width="13.04" height="6.81" fill="#1468c0"/>
<rect x="342.66" y="461.78" width="49.76" height="6.81" fill="#389af0"/>
<rect x="75.20" y="467.99" width="6.82" height="6.81" fill="#1468c0"/>
<rect x="81.42" y="467.99" width="6.82" height="6.81" fill="#389af0"/>
<rect x="87.64" y="467.99" width="6.82" height="6.81" fill="#0d58ae"/>
<rect x="93.86" y="467.99" width="19.26" height="6.81" fill="#00006c"/>
<rect x="112.52" y="467.99" width="6.82" height="6.81" fill="#06248c"/>
<rect x="118.74" y="467.99" width="6.82" height="6.81" fill="#1e78d0"/>
<rect x="124.96" y="467.99" width="6.82" height="6.81" fill="#1468c0"/>
<rect x="131.18" y="467.99" width="6.82" height="6.81" fill="#00006c"/>
<rect x="137.40" y="467.99" width="6.82" height="6.81" fill="#0d58ae"/>
<rect x="143.62" y="467.99" width="6.82" height="6.81" fill="#1e78d0"/>
<rect x="149.84" y="467.99" width="6.82" height="6.81" fill="#1468c0"/>
<rect x="156.06" y="467.99" width="6.82" height="6.81" fill="#0d58ae"/>
<rect x="162.28" y="467.99" width="19.26" height="6.81" fill="#1468c0"/>
<rect x="180.94" y="467.99" width="6.82" height="6.81" fill="#0d58ae"/>
<rect x="187.16" y="467.99" width="6.82" height="6.81" fill="#06248c"/>
<rect x="193.38" y="467.99" width="13.04" height="6.81" fill="#1468c0"/>
<rect x="205.82" y="467.99" width="6.82" height="6.81" fill="#0a3e9e"/>
<rect x="212.04" y="467.99" width="6.82" height="6.81" fill="#0d58ae"/>
<rect x="218.26" y="467.99" width="6.82" height="6.81" fill="#06248c"/>
<rect x="224.48" y="467.99" width="6.82" height="6.81" fill="#0a3e9e"/>
<rect x="230.70" y="467.99" width="6.82" height="6.81" fill="#1468c0"/>
<rect x="236.92" y="467.99" width="19.26" height="6.81" fill="#0d58ae"/>
<rect x="255.58" y="467.99" width="19.26" height="6.81" fill="#1468c0"/>
<rect x="274.24" y="467.99" width="13.04" height="6.81" fill="#0d58ae"/>
<rect x="286.68" y="467.99" width="6.82" height="6.81" fill="#1468c0"/>
<rect x="292.90" y="467.99" width="13.04" height="6.81" fill="#00006c"/>
<rect x="305.34" y="467.99" width="6.82" height="6.81" fill="#0a3e9e"/>
<rect x="311.56" y="467.99" width="13.04" height="6.81" fill="#06248c"/>
<rect x="324.00" y="467.99" width="6.82" height="6.81" fill="#000040"/>
<rect x="330.22" y="467.99" width="6.82" height="6.81" fill="#0a3e9e"/>
<rect x="336.44" y="467.99" width="6.82" height="6.81" fill="#00006c"/>
<rect x="342.66" y="467.99" width="6.82" height="6.81" fill="#2886de"/>
<rect x="348.88" y="467.99" width="6.82" height="6.81" fill="#389af0"/>
<rect x="355.10" y="467.99" width="37.32" height="6.81" fill="#2886de"/>
<rect x="75.20" y="474.20" width="6.82" height="6.81" fill="#0d58ae"/>
<rect x="81.42" y="474.20" width="25.48" height="6.81" fill="#e4e3e1"/>
<rect x="106.30" y="474.20" width="6.82" height="6.81" fill="#52b2fc"/>
<rect x="112.52" y="474.20" width="19.26" height="6.81" fill="#e4e3e1"/>
<rect x="131.18" y="474.20" width="6.82" height="6.81" fill="#8fcbf8"/>
<rect x="137.40" y="474.20" width="19.26" height="6.81" fill="#e4e3e1"/>
<rect x="156.06" y="474.20" width="6.82" height="6.81" fill="#8fcbf8"/>
<rect x="162.28" y="474.20" width="13.04" height="6.81" fill="#e4e3e1"/>
<rect x="174.72" y="474.20" width="13.04" height="6.81" fill="#8fcbf8"/>
<rect x="187.16" y="474.20" width="19.26" height="6.81" fill="#e4e3e1"/>
<rect x="205.82" y="474.20" width="13.04" height="6.81" fill="#8fcbf8"/>
<rect x="218.26" y="474.20" width="6.82" height="6.81" fill="#52b2fc"/>
<rect x="224.48" y="474.20" width="13.04" height="6.81" fill="#e4e3e1"/>
<rect x="236.92" y="474.20" width="19.26" height="6.81" fill="#8fcbf8"/>
<rect x="255.58" y="474.20" width="19.26" height="6.81" fill="#e4e3e1"/>
<rect x="274.24" y="474.20" width="13.04" height="6.81" fill="#8fcbf8"/>
<rect x="286.68" y="474.20" width="6.82" height="6.81" fill="#e4e3e1"/>
<rect x="292.90" y="474.20" width="6.82" height="6.81" fill="#8fcbf8"/>
<rect x="299.12" y="474.20" width="44.14" height="6.81" fill="#e4e3e1"/>
<rect x="342.66" y="474.20" width="6.82" height="6.81" fill="#2886de"/>
<rect x="348.88" y="474.20" width="6.82" height="6.81" fill="#52b2fc"/>
<rect x="355.10" y="474.20" width="31.70" height="6.81" fill="#2886de"/>
<rect x="386.20" y="474.20" width="6.22" height="6.81" fill="#000000"/>
<rect x="75.20" y="480.41" width="6.82" height="6.81" fill="#1e78d0"/>
<rect x="81.42" y="480.41" width="6.82" height="6.81" fill="#8fcbf8"/>
<rect x="87.64" y="480.41" width="6.82" height="6.81" fill="#52b2fc"/>
<rect x="93.86" y="480.41" width="31.70" height="6.81" fill="#e4e3e1"/>
<rect x="124.96" y="480.41" width="6.82" height="6.81" fill="#2886de"/>
<rect x="131.18" y="480.41" width="6.82" height="6.81" fill="#8fcbf8"/>
<rect x="137.40" y="480.41" width="6.82" height="6.81" fill="#e4e3e1"/>
<rect x="143.62" y="480.41" width="13.04" height="6.81" fill="#52b2fc"/>
<rect x="156.06" y="480.41" width="25.48" height="6.81" fill="#2886de"/>
<rect x="180.94" y="480.41" width="6.82" height="6.81" fill="#389af0"/>
<rect x="187.16" y="480.41" width="6.82" height="6.81" fill="#e4e3e1"/>
<rect x="193.38" y="480.41" width="6.82" height="6.81" fill="#2886de"/>
<rect x="199.60" y="480.41" width="6.82" height="6.81" fill="#52b2fc"/>
<rect x="205.82" y="480.41" width="6.82" height="6.81" fill="#8fcbf8"/>
<rect x="212.04" y="480.41" width="6.82" height="6.81" fill="#52b2fc"/>
<rect x="218.26" y="480.41" width="13.04" height="6.81" fill="#e4e3e1"/>
<rect x="230.70" y="480.41" width="13.04" height="6.81" fill="#52b2fc"/>
<rect x="243.14" y="480.41" width="13.04" height="6.81" fill="#8fcbf8"/>
<rect x="255.58" y="480.41" width="6.82" height="6.81" fill="#52b2fc"/>
<rect x="261.80" y="480.41" width="6.82" height="6.81" fill="#2886de"/>
<rect x="268.02" y="480.41" width="6.82" height="6.81" fill="#52b2fc"/>
<rect x="274.24" y="480.41" width="13.04" height="6.81" fill="#8fcbf8"/>
<rect x="286.68" y="480.41" width="6.82" height="6.81" fill="#52b2fc"/>
<rect x="292.90" y="480.41" width="19.26" height="6.81" fill="#8fcbf8"/>
<rect x="311.56" y="480.41" width="25.48" height="6.81" fill="#e4e3e1"/>
<rect x="336.44" y="480.41" width="6.82" height="6.81" fill="#8fcbf8"/>
<rect x="342.66" y="480.41" width="6.82" height="6.81" fill="#00006c"/>
<rect x="348.88" y="480.41" width="6.82" height="6.81" fill="#06248c"/>
<rect x="355.10" y="480.41" width="13.04" height="6.81" fill="#000040"/>
<rect x="367.54" y="480.41" width="6.82" height="6.81" fill="#00006c"/>
<rect x="373.76" y="480.41" width="6.82" height="6.81" fill="#0a3e9e"/>
<rect x="379.98" y="480.41" width="6.82" height="6.81" fill="#000040"/>
<rect x="386.20" y="480.41" width="6.22" height="6.81" fill="#1468c0"/>
<rect x="75.20" y="486.62" width="6.82" height="6.81" fill="#0d58ae"/>
<rect x="81.42" y="486.62" width="6.82" height="6.81" fill="#1468c0"/>
<rect x="87.64" y="486.62" width="6.82" height="6.81" fill="#8fcbf8"/>
<rect x="93.86" y="486.62" width="25.48" height="6.81" fill="#2886de"/>
<rect x="118.74" y="486.62" width="6.82" height="6.81" fill="#e4e3e1"/>
<rect x="124.96" y="486.62" width="19.26" height="6.81" fill="#2886de"/>
<rect x="143.62" y="486.62" width="13.04" height="6.81" fill="#8fcbf8"/>
<rect x="156.06" y="486.62" width="6.82" height="6.81" fill="#52b2fc"/>
<rect x="162.28" y="486.62" width="13.04" height="6.81" fill="#8fcbf8"/>
<rect x="174.72" y="486.62" width="13.04" height="6.81" fill="#52b2fc"/>
<rect x="187.16" y="486.62" width="13.04" height="6.81" fill="#2886de"/>
<rect x="199.60" y="486.62" width="19.26" height="6.81" fill="#8fcbf8"/>
<rect x="218.26" y="486.62" width="13.04" height="6.81" fill="#2886de"/>
<rect x="230.70" y="486.62" width="6.82" height="6.81" fill="#b9dcf5"/>
<rect x="236.92" y="486.62" width="13.04" height="6.81" fill="#52b2fc"/>
<rect x="249.36" y="486.62" width="6.82" height="6.81" fill="#8fcbf8"/>
<rect x="255.58" y="486.62" width="6.82" height="6.81" fill="#b9dcf5"/>
<rect x="261.80" y="486.62" width="6.82" height="6.81" fill="#2886de"/>
<rect x="268.02" y="486.62" width="6.82" height="6.81" fill="#b9dcf5"/>
<rect x="274.24" y="486.62" width="13.04" height="6.81" fill="#8fcbf8"/>
<rect x="286.68" y="486.62" width="6.82" height="6.81" fill="#e4e3e1"/>
<rect x="292.90" y="486.62" width="6.82" height="6.81" fill="#2886de"/>
<rect x="299.12" y="486.62" width="6.82" height="6.81" fill="#1468c0"/>
<rect x="305.34" y="486.62" width="6.82" height="6.81" fill="#2886de"/>
<rect x="311.56" y="486.62" width="19.26" height="6.81" fill="#e4e3e1"/>
<rect x="330.22" y="486.62" width="13.04" height="6.81" fill="#2886de"/>
<rect x="342.66" y="486.62" width="6.82" height="6.81" fill="#00006c"/>
<rect x="348.88" y="486.62" width="6.82" height="6.81" fill="#0d58ae"/>
<rect x="355.10" y="486.62" width="6.82" height="6.81" fill="#06248c"/>
<rect x="361.32" y="486.62" width="6.82" height="6.81" fill="#00006c"/>
<rect x="367.54" y="486.62" width="13.04" height="6.81" fill="#0d58ae"/>
<rect x="379.98" y="486.62" width="6.82" height="6.81" fill="#00006c"/>
<rect x="386.20" y="486.62" width="6.22" height="6.81" fill="#1468c0"/>
<rect x="75.20" y="492.83" width="6.82" height="6.81" fill="#0d58ae"/>
<rect x="81.42" y="492.83" width="6.82" height="6.81" fill="#000040"/>
<rect x="87.64" y="492.83" width="6.82" height="6.81" fill="#2886de"/>
<rect x="93.86" y="492.83" width="19.26" height="6.81" fill="#1e78d0"/>
<rect x="112.52" y="492.83" width="6.82" height="6.81" fill="#1468c0"/>
<rect x="118.74" y="492.83" width="6.82" height="6.81" fill="#0d58ae"/>
<rect x="124.96" y="492.83" width="19.26" height="6.81" fill="#1e78d0"/>
<rect x="143.62" y="492.83" width="6.82" height="6.81" fill="#2886de"/>
<rect x="149.84" y="492.83" width="6.82" height="6.81" fill="#1e78d0"/>
<rect x="156.06" y="492.83" width="31.70" height="6.81" fill="#2886de"/>
<rect x="187.16" y="492.83" width="112.56" height="6.81" fill="#1e78d0"/>
<rect x="299.12" y="492.83" width="6.82" height="6.81" fill="#06248c"/>
<rect x="305.34" y="492.83" width="6.82" height="6.81" fill="#0d58ae"/>
<rect x="311.56" y="492.83" width="13.04" height="6.81" fill="#e4e3e1"/>
<rect x="324.00" y="492.83" width="6.82" height="6.81" fill="#0d58ae"/>
<rect x="330.22" y="492.83" width="6.82" height="6.81" fill="#2886de"/>
<rect x="336.44" y="492.83" width="6.82" height="6.81" fill="#1e78d0"/>
<rect x="342.66" y="492.83" width="6.82" height="6.81" fill="#00006c"/>
<rect x="348.88" y="492.83" width="13.04" height="6.81" fill="#000000"/>
<rect x="361.32" y="492.83" width="13.04" height="6.81" fill="#000040"/>
<rect x="373.76" y="492.83" width="13.04" height="6.81" fill="#00006c"/>
<rect x="386.20" y="492.83" width="6.22" height="6.81" fill="#0d58ae"/>
<rect x="75.20" y="499.04" width="6.82" height="6.81" fill="#000000"/>
<rect x="81.42" y="499.04" width="6.82" height="6.81" fill="#0a3e9e"/>
<rect x="87.64" y="499.04" width="6.82" height="6.81" fill="#2886de"/>
<rect x="93.86" y="499.04" width="13.04" height="6.81" fill="#1468c0"/>
<rect x="106.30" y="499.04" width="6.82" height="6.81" fill="#0d58ae"/>
<rect x="112.52" y="499.04" width="6.82" height="6.81" fill="#1468c0"/>
<rect x="118.74" y="499.04" width="6.82" height="6.81" fill="#e4e3e1"/>
<rect x="124.96" y="499.04" width="13.04" height="6.81" fill="#1e78d0"/>
<rect x="137.40" y="499.04" width="6.82" height="6.81" fill="#0d58ae"/>
<rect x="143.62" y="499.04" width="44.14" height="6.81" fill="#2886de"/>
<rect x="187.16" y="499.04" width="6.82" height="6.81" fill="#0d58ae"/>
<rect x="193.38" y="499.04" width="25.48" height="6.81" fill="#1e78d0"/>
<rect x="218.26" y="499.04" width="13.04" height="6.81" fill="#0d58ae"/>
<rect x="230.70" y="499.04" width="6.82" height="6.81" fill="#2886de"/>
<rect x="236.92" y="499.04" width="19.26" height="6.81" fill="#1e78d0"/>
<rect x="255.58" y="499.04" width="6.82" height="6.81" fill="#2886de"/>
<rect x="261.80" y="499.04" width="25.48" height="6.81" fill="#1e78d0"/>
<rect x="286.68" y="499.04" width="6.82" height="6.81" fill="#2886de"/>
<rect x="292.90" y="499.04" width="6.82" height="6.81" fill="#1e78d0"/>
<rect x="299.12" y="499.04" width="6.82" height="6.81" fill="#00006c"/>
<rect x="305.34" y="499.04" width="6.82" height="6.81" fill="#0d58ae"/>
<rect x="311.56" y="499.04" width="6.82" height="6.81" fill="#2886de"/>
<rect x="317.78" y="499.04" width="6.82" height="6.81" fill="#e4e3e1"/>
<rect x="324.00" y="499.04" width="6.82" height="6.81" fill="#1468c0"/>
<rect x="330.22" y="499.04" width="6.82" height="6.81" fill="#2886de"/>
<rect x="336.44" y="499.04" width="6.82" height="6.81" fill="#1e78d0"/>
<rect x="342.66" y="499.04" width="6.82" height="6.81" fill="#000000"/>
<rect x="348.88" y="499.04" width="13.04" height="6.81" fill="#06248c"/>
<rect x="361.32" y="499.04" width="6.82" height="6.81" fill="#000040"/>
<rect x="367.54" y="499.04" width="6.82" height="6.81" fill="#00006c"/>
<rect x="373.76" y="499.04" width="6.82" height="6.81" fill="#0d58ae"/>
<rect x="379.98" y="499.04" width="6.82" height="6.81" fill="#000040"/>
<rect x="386.20" y="499.04" width="6.22" height="6.81" fill="#000000"/>
<rect x="75.20" y="505.25" width="6.82" height="6.81" fill="#0d58ae"/>
<rect x="81.42" y="505.25" width="6.82" height="6.81" fill="#000000"/>
<rect x="87.64" y="505.25" width="19.26" height="6.81" fill="#1e78d0"/>
<rect x="106.30" y="505.25" width="13.04" height="6.81" fill="#1468c0"/>
<rect x="118.74" y="505.25" width="6.82" height="6.81" fill="#2886de"/>
<rect x="124.96" y="505.25" width="19.26" height="6.81" fill="#1e78d0"/>
<rect x="143.62" y="505.25" width="44.14" height="6.81" fill="#2886de"/>
<rect x="187.16" y="505.25" width="6.82" height="6.81" fill="#1e78d0"/>
<rect x="193.38" y="505.25" width="13.04" height="6.81" fill="#1468c0"/>
<rect x="205.82" y="505.25" width="13.04" height="6.81" fill="#1e78d0"/>
<rect x="218.26" y="505.25" width="19.26" height="6.81" fill="#1468c0"/>
<rect x="236.92" y="505.25" width="31.70" height="6.81" fill="#1e78d0"/>
<rect x="268.02" y="505.25" width="6.82" height="6.81" fill="#1468c0"/>
<rect x="274.24" y="505.25" width="25.48" height="6.81" fill="#1e78d0"/>
<rect x="299.12" y="505.25" width="6.82" height="6.81" fill="#0d58ae"/>
<rect x="305.34" y="505.25" width="6.82" height="6.81" fill="#1468c0"/>
<rect x="311.56" y="505.25" width="6.82" height="6.81" fill="#1e78d0"/>
<rect x="317.78" y="505.25" width="13.04" height="6.81" fill="#e4e3e1"/>
<rect x="330.22" y="505.25" width="6.82" height="6.81" fill="#2886de"/>
<rect x="336.44" y="505.25" width="6.82" height="6.81" fill="#1e78d0"/>
<rect x="342.66" y="505.25" width="25.48" height="6.81" fill="#0d58ae"/>
<rect x="367.54" y="505.25" width="6.82" height="6.81" fill="#0a3e9e"/>
<rect x="373.76" y="505.25" width="18.66" height="6.81" fill="#0d58ae"/>
<rect x="75.20" y="511.46" width="6.82" height="6.81" fill="#1e78d0"/>
<rect x="81.42" y="511.46" width="13.04" height="6.81" fill="#2886de"/>
<rect x="93.86" y="511.46" width="19.26" height="6.81" fill="#0d58ae"/>
<rect x="112.52" y="511.46" width="6.82" height="6.81" fill="#0a3e9e"/>
<rect x="118.74" y="511.46" width="6.82" height="6.81" fill="#e4e3e1"/>
<rect x="124.96" y="511.46" width="6.82" height="6.81" fill="#2886de"/>
<rect x="131.18" y="511.46" width="13.04" height="6.81" fill="#0d58ae"/>
<rect x="143.62" y="511.46" width="13.04" height="6.81" fill="#2886de"/>
<rect x="156.06" y="511.46" width="6.82" height="6.81" fill="#0d58ae"/>
<rect x="162.28" y="511.46" width="25.48" height="6.81" fill="#2886de"/>
<rect x="187.16" y="511.46" width="6.82" height="6.81" fill="#0d58ae"/>
<rect x="193.38" y="511.46" width="13.04" height="6.81" fill="#2886de"/>
<rect x="205.82" y="511.46" width="6.82" height="6.81" fill="#0d58ae"/>
<rect x="212.04" y="511.46" width="6.82" height="6.81" fill="#1e78d0"/>
<rect x="218.26" y="511.46" width="13.04" height="6.81" fill="#0d58ae"/>
<rect x="230.70" y="511.46" width="6.82" height="6.81" fill="#2886de"/>
<rect x="236.92" y="511.46" width="13.04" height="6.81" fill="#1468c0"/>
<rect x="249.36" y="511.46" width="6.82" height="6.81" fill="#0d58ae"/>
<rect x="255.58" y="511.46" width="6.82" height="6.81" fill="#2886de"/>
<rect x="261.80" y="511.46" width="6.82" height="6.81" fill="#1e78d0"/>
<rect x="268.02" y="511.46" width="6.82" height="6.81" fill="#2886de"/>
<rect x="274.24" y="511.46" width="6.82" height="6.81" fill="#0d58ae"/>
<rect x="280.46" y="511.46" width="6.82" height="6.81" fill="#1468c0"/>
<rect x="286.68" y="511.46" width="6.82" height="6.81" fill="#2886de"/>
<rect x="292.90" y="511.46" width="6.82" height="6.81" fill="#1468c0"/>
<rect x="299.12" y="511.46" width="13.04" height="6.81" fill="#0d58ae"/>
<rect x="311.56" y="511.46" width="6.82" height="6.81" fill="#1e78d0"/>
<rect x="317.78" y="511.46" width="6.82" height="6.81" fill="#2886de"/>
<rect x="324.00" y="511.46" width="6.82" height="6.81" fill="#1468c0"/>
<rect x="330.22" y="511.46" width="6.82" height="6.81" fill="#0d58ae"/>
<rect x="336.44" y="511.46" width="6.82" height="6.81" fill="#1468c0"/>
<rect x="342.66" y="511.46" width="6.82" height="6.81" fill="#0d58ae"/>
<rect x="348.88" y="511.46" width="6.82" height="6.81" fill="#0a3e9e"/>
<rect x="355.10" y="511.46" width="6.82" height="6.81" fill="#0d58ae"/>
<rect x="361.32" y="511.46" width="6.82" height="6.81" fill="#1468c0"/>
<rect x="367.54" y="511.46" width="19.26" height="6.81" fill="#0d58ae"/>
<rect x="386.20" y="511.46" width="6.22" height="6.81" fill="#2886de"/>
<rect x="75.20" y="517.67" width="6.82" height="6.81" fill="#1e78d0"/>
<rect x="81.42" y="517.67" width="13.04" height="6.81" fill="#2886de"/>
<rect x="93.86" y="517.67" width="25.48" height="6.81" fill="#0d58ae"/>
<rect x="118.74" y="517.67" width="6.82" height="6.81" fill="#e4e3e1"/>
<rect x="124.96" y="517.67" width="6.82" height="6.81" fill="#2886de"/>
<rect x="131.18" y="517.67" width="6.82" height="6.81" fill="#1e78d0"/>
<rect x="137.40" y="517.67" width="6.82" height="6.81" fill="#0d58ae"/>
<rect x="143.62" y="517.67" width="6.82" height="6.81" fill="#2886de"/>
<rect x="149.84" y="517.67" width="13.04" height="6.81" fill="#1e78d0"/>
<rect x="162.28" y="517.67" width="25.48" height="6.81" fill="#2886de"/>
<rect x="187.16" y="517.67" width="6.82" height="6.81" fill="#0d58ae"/>
<rect x="193.38" y="517.67" width="13.04" height="6.81" fill="#2886de"/>
<rect x="205.82" y="517.67" width="6.82" height="6.81" fill="#1e78d0"/>
<rect x="212.04" y="517.67" width="6.82" height="6.81" fill="#2886de"/>
<rect x="218.26" y="517.67" width="13.04" height="6.81" fill="#0d58ae"/>
<rect x="230.70" y="517.67" width="6.82" height="6.81" fill="#2886de"/>
<rect x="236.92" y="517.67" width="19.26" height="6.81" fill="#1e78d0"/>
<rect x="255.58" y="517.67" width="19.26" height="6.81" fill="#2886de"/>
<rect x="274.24" y="517.67" width="13.04" height="6.81" fill="#1e78d0"/>
<rect x="286.68" y="517.67" width="6.82" height="6.81" fill="#2886de"/>
<rect x="292.90" y="517.67" width="6.82" height="6.81" fill="#1e78d0"/>
<rect x="299.12" y="517.67" width="13.04" height="6.81" fill="#1468c0"/>
<rect x="311.56" y="517.67" width="13.04" height="6.81" fill="#2886de"/>
<rect x="324.00" y="517.67" width="13.04" height="6.81" fill="#0d58ae"/>
<rect x="336.44" y="517.67" width="6.82" height="6.81" fill="#1e78d0"/>
<rect x="342.66" y="517.67" width="49.76" height="6.81" fill="#2886de"/>
<rect x="75.20" y="523.88" width="6.82" height="6.81" fill="#0d58ae"/>
<rect x="81.42" y="523.88" width="6.82" height="6.81" fill="#1e78d0"/>
<rect x="87.64" y="523.88" width="6.82" height="6.81" fill="#1468c0"/>
<rect x="93.86" y="523.88" width="19.26" height="6.81" fill="#0d58ae"/>
<rect x="112.52" y="523.88" width="6.82" height="6.81" fill="#06248c"/>
<rect x="118.74" y="523.88" width="13.04" height="6.81" fill="#1e78d0"/>
<rect x="131.18" y="523.88" width="6.82" height="6.81" fill="#1468c0"/>
<rect x="137.40" y="523.88" width="6.82" height="6.81" fill="#0d58ae"/>
<rect x="143.62" y="523.88" width="6.82" height="6.81" fill="#1e78d0"/>
<rect x="149.84" y="523.88" width="6.82" height="6.81" fill="#1468c0"/>
<rect x="156.06" y="523.88" width="6.82" height="6.81" fill="#1e78d0"/>
<rect x="162.28" y="523.88" width="25.48" height="6.81" fill="#1468c0"/>
<rect x="187.16" y="523.88" width="6.82" height="6.81" fill="#0d58ae"/>
<rect x="193.38" y="523.88" width="6.82" height="6.81" fill="#1468c0"/>
<rect x="199.60" y="523.88" width="13.04" height="6.81" fill="#0d58ae"/>
<rect x="212.04" y="523.88" width="6.82" height="6.81" fill="#1468c0"/>
<rect x="218.26" y="523.88" width="13.04" height="6.81" fill="#0d58ae"/>
<rect x="230.70" y="523.88" width="6.82" height="6.81" fill="#1468c0"/>
<rect x="236.92" y="523.88" width="13.04" height="6.81" fill="#0d58ae"/>
<rect x="249.36" y="523.88" width="25.48" height="6.81" fill="#1468c0"/>
<rect x="274.24" y="523.88" width="13.04" height="6.81" fill="#0d58ae"/>
<rect x="286.68" y="523.88" width="6.82" height="6.81" fill="#1e78d0"/>
<rect x="292.90" y="523.88" width="6.82" height="6.81" fill="#0d58ae"/>
<rect x="299.12" y="523.88" width="6.82" height="6.81" fill="#06248c"/>
<rect x="305.34" y="523.88" width="6.82" height="6.81" fill="#0d58ae"/>
<rect x="311.56" y="523.88" width="6.82" height="6.81" fill="#00006c"/>
<rect x="317.78" y="523.88" width="6.82" height="6.81" fill="#0d58ae"/>
<rect x="324.00" y="523.88" width="13.04" height="6.81" fill="#1468c0"/>
<rect x="336.44" y="523.88" width="6.82" height="6.81" fill="#0d58ae"/>
<rect x="342.66" y="523.88" width="44.14" height="6.81" fill="#1e78d0"/>
<rect x="386.20" y="523.88" width="6.22" height="6.81" fill="#2886de"/>
<rect x="75.20" y="530.09" width="6.82" height="6.81" fill="#1468c0"/>
<rect x="81.42" y="530.09" width="6.82" height="6.81" fill="#1e78d0"/>
<rect x="87.64" y="530.09" width="31.70" height="6.81" fill="#0d58ae"/>
<rect x="118.74" y="530.09" width="6.82" height="6.81" fill="#1e78d0"/>
<rect x="124.96" y="530.09" width="6.82" height="6.81" fill="#1468c0"/>
<rect x="131.18" y="530.09" width="13.04" height="6.81" fill="#0d58ae"/>
<rect x="143.62" y="530.09" width="37.92" height="6.81" fill="#1468c0"/>
<rect x="180.94" y="530.09" width="6.82" height="6.81" fill="#1e78d0"/>
<rect x="187.16" y="530.09" width="112.56" height="6.81" fill="#1468c0"/>
<rect x="299.12" y="530.09" width="13.04" height="6.81" fill="#0d58ae"/>
<rect x="311.56" y="530.09" width="6.82" height="6.81" fill="#e4e3e1"/>
<rect x="317.78" y="530.09" width="19.26" height="6.81" fill="#1e78d0"/>
<rect x="336.44" y="530.09" width="19.26" height="6.81" fill="#1468c0"/>
<rect x="355.10" y="530.09" width="13.04" height="6.81" fill="#0d58ae"/>
<rect x="367.54" y="530.09" width="24.88" height="6.81" fill="#1468c0"/>
<rect x="75.20" y="536.30" width="6.82" height="6.81" fill="#0d58ae"/>
<rect x="81.42" y="536.30" width="6.82" height="6.81" fill="#52b2fc"/>
<rect x="87.64" y="536.30" width="6.82" height="6.81" fill="#1468c0"/>
<rect x="93.86" y="536.30" width="13.04" height="6.81" fill="#1e78d0"/>
<rect x="106.30" y="536.30" width="13.04" height="6.81" fill="#0d58ae"/>
<rect x="118.74" y="536.30" width="13.04" height="6.81" fill="#1e78d0"/>
<rect x="131.18" y="536.30" width="13.04" height="6.81" fill="#1468c0"/>
<rect x="143.62" y="536.30" width="6.82" height="6.81" fill="#2886de"/>
<rect x="149.84" y="536.30" width="6.82" height="6.81" fill="#1e78d0"/>
<rect x="156.06" y="536.30" width="6.82" height="6.81" fill="#1468c0"/>
<rect x="162.28" y="536.30" width="19.26" height="6.81" fill="#1e78d0"/>
<rect x="180.94" y="536.30" width="13.04" height="6.81" fill="#1468c0"/>
<rect x="193.38" y="536.30" width="6.82" height="6.81" fill="#1e78d0"/>
<rect x="199.60" y="536.30" width="6.82" height="6.81" fill="#1468c0"/>
<rect x="205.82" y="536.30" width="6.82" height="6.81" fill="#0d58ae"/>
<rect x="212.04" y="536.30" width="44.14" height="6.81" fill="#1468c0"/>
<rect x="255.58" y="536.30" width="13.04" height="6.81" fill="#1e78d0"/>
<rect x="268.02" y="536.30" width="19.26" height="6.81" fill="#1468c0"/>
<rect x="286.68" y="536.30" width="6.82" height="6.81" fill="#1e78d0"/>
<rect x="292.90" y="536.30" width="13.04" height="6.81" fill="#1468c0"/>
<rect x="305.34" y="536.30" width="6.82" height="6.81" fill="#1e78d0"/>
<rect x="311.56" y="536.30" width="6.82" height="6.81" fill="#0d58ae"/>
<rect x="317.78" y="536.30" width="6.82" height="6.81" fill="#1e78d0"/>
<rect x="324.00" y="536.30" width="6.82" height="6.81" fill="#0d58ae"/>
<rect x="330.22" y="536.30" width="6.82" height="6.81" fill="#1e78d0"/>
<rect x="336.44" y="536.30" width="6.82" height="6.81" fill="#0d58ae"/>
<rect x="342.66" y="536.30" width="44.14" height="6.81" fill="#2886de"/>
<rect x="386.20" y="536.30" width="6.22" height="6.81" fill="#1468c0"/>
<rect x="75.20" y="542.51" width="6.82" height="6.81" fill="#1e78d0"/>
<rect x="81.42" y="542.51" width="6.82" height="6.81" fill="#2886de"/>
<rect x="87.64" y="542.51" width="25.48" height="6.81" fill="#1468c0"/>
<rect x="112.52" y="542.51" width="6.82" height="6.81" fill="#0d58ae"/>
<rect x="118.74" y="542.51" width="19.26" height="6.81" fill="#1468c0"/>
<rect x="137.40" y="542.51" width="6.82" height="6.81" fill="#0d58ae"/>
<rect x="143.62" y="542.51" width="6.82" height="6.81" fill="#1e78d0"/>
<rect x="149.84" y="542.51" width="6.82" height="6.81" fill="#1468c0"/>
<rect x="156.06" y="542.51" width="6.82" height="6.81" fill="#0d58ae"/>
<rect x="162.28" y="542.51" width="44.14" height="6.81" fill="#1468c0"/>
<rect x="205.82" y="542.51" width="13.04" height="6.81" fill="#0d58ae"/>
<rect x="218.26" y="542.51" width="6.82" height="6.81" fill="#1468c0"/>
<rect x="224.48" y="542.51" width="6.82" height="6.81" fill="#0d58ae"/>
<rect x="230.70" y="542.51" width="6.82" height="6.81" fill="#1468c0"/>
<rect x="236.92" y="542.51" width="13.04" height="6.81" fill="#0d58ae"/>
<rect x="249.36" y="542.51" width="25.48" height="6.81" fill="#1468c0"/>
<rect x="274.24" y="542.51" width="13.04" height="6.81" fill="#0d58ae"/>
<rect x="286.68" y="542.51" width="13.04" height="6.81" fill="#1468c0"/>
<rect x="299.12" y="542.51" width="13.04" height="6.81" fill="#1e78d0"/>
<rect x="311.56" y="542.51" width="6.82" height="6.81" fill="#0d58ae"/>
<rect x="317.78" y="542.51" width="13.04" height="6.81" fill="#0a3e9e"/>
<rect x="330.22" y="542.51" width="6.82" height="6.81" fill="#1468c0"/>
<rect x="336.44" y="542.51" width="6.82" height="6.81" fill="#1e78d0"/>
<rect x="342.66" y="542.51" width="49.76" height="6.81" fill="#2886de"/>
<rect x="75.20" y="548.72" width="6.82" height="6.81" fill="#0d58ae"/>
<rect x="81.42" y="548.72" width="6.82" height="6.81" fill="#000040"/>
<rect x="87.64" y="548.72" width="212.08" height="6.81" fill="#2886de"/>
<rect x="299.12" y="548.72" width="6.82" height="6.81" fill="#0d58ae"/>
<rect x="305.34" y="548.72" width="6.82" height="6.81" fill="#1e78d0"/>
<rect x="311.56" y="548.72" width="6.82" height="6.81" fill="#e4e3e1"/>
<rect x="317.78" y="548.72" width="25.48" height="6.81" fill="#2886de"/>
<rect x="342.66" y="548.72" width="6.82" height="6.81" fill="#1e78d0"/>
<rect x="348.88" y="548.72" width="6.82" height="6.81" fill="#2886de"/>
<rect x="355.10" y="548.72" width="19.26" height="6.81" fill="#1e78d0"/>
<rect x="373.76" y="548.72" width="6.82" height="6.81" fill="#2886de"/>
<rect x="379.98" y="548.72" width="6.82" height="6.81" fill="#1e78d0"/>
<rect x="386.20" y="548.72" width="6.22" height="6.81" fill="#1468c0"/>
<rect x="75.20" y="554.93" width="6.82" height="6.81" fill="#0d58ae"/>
<rect x="81.42" y="554.93" width="6.82" height="6.81" fill="#0a3e9e"/>
<rect x="87.64" y="554.93" width="31.70" height="6.81" fill="#2886de"/>
<rect x="118.74" y="554.93" width="6.82" height="6.81" fill="#e4e3e1"/>
<rect x="124.96" y="554.93" width="6.82" height="6.81" fill="#1468c0"/>
<rect x="131.18" y="554.93" width="6.82" height="6.81" fill="#1e78d0"/>
<rect x="137.40" y="554.93" width="13.04" height="6.81" fill="#2886de"/>
<rect x="149.84" y="554.93" width="19.26" height="6.81" fill="#1e78d0"/>
<rect x="168.50" y="554.93" width="6.82" height="6.81" fill="#1468c0"/>
<rect x="174.72" y="554.93" width="6.82" height="6.81" fill="#1e78d0"/>
<rect x="180.94" y="554.93" width="6.82" height="6.81" fill="#0d58ae"/>
<rect x="187.16" y="554.93" width="6.82" height="6.81" fill="#1e78d0"/>
<rect x="193.38" y="554.93" width="13.04" height="6.81" fill="#0d58ae"/>
<rect x="205.82" y="554.93" width="6.82" height="6.81" fill="#1468c0"/>
<rect x="212.04" y="554.93" width="6.82" height="6.81" fill="#0d58ae"/>
<rect x="218.26" y="554.93" width="13.04" height="6.81" fill="#1e78d0"/>
<rect x="230.70" y="554.93" width="6.82" height="6.81" fill="#1468c0"/>
<rect x="236.92" y="554.93" width="13.04" height="6.81" fill="#0d58ae"/>
<rect x="249.36" y="554.93" width="6.82" height="6.81" fill="#1468c0"/>
<rect x="255.58" y="554.93" width="6.82" height="6.81" fill="#1e78d0"/>
<rect x="261.80" y="554.93" width="6.82" height="6.81" fill="#0d58ae"/>
<rect x="268.02" y="554.93" width="31.70" height="6.81" fill="#1468c0"/>
<rect x="299.12" y="554.93" width="6.82" height="6.81" fill="#0d58ae"/>
<rect x="305.34" y="554.93" width="6.82" height="6.81" fill="#1468c0"/>
<rect x="311.56" y="554.93" width="13.04" height="6.81" fill="#e4e3e1"/>
<rect x="324.00" y="554.93" width="6.82" height="6.81" fill="#1e78d0"/>
<rect x="330.22" y="554.93" width="25.48" height="6.81" fill="#2886de"/>
<rect x="355.10" y="554.93" width="13.04" height="6.81" fill="#1e78d0"/>
<rect x="367.54" y="554.93" width="6.82" height="6.81" fill="#2886de"/>
<rect x="373.76" y="554.93" width="13.04" height="6.81" fill="#1e78d0"/>
<rect x="386.20" y="554.93" width="6.22" height="6.81" fill="#1468c0"/>
<rect x="75.20" y="561.14" width="6.82" height="6.81" fill="#0d58ae"/>
<rect x="81.42" y="561.14" width="6.82" height="6.81" fill="#00006c"/>
<rect x="87.64" y="561.14" width="6.82" height="6.81" fill="#2886de"/>
<rect x="93.86" y="561.14" width="19.26" height="6.81" fill="#1e78d0"/>
<rect x="112.52" y="561.14" width="6.82" height="6.81" fill="#1468c0"/>
<rect x="118.74" y="561.14" width="6.82" height="6.81" fill="#e4e3e1"/>
<rect x="124.96" y="561.14" width="13.04" height="6.81" fill="#2886de"/>
<rect x="137.40" y="561.14" width="6.82" height="6.81" fill="#1e78d0"/>
<rect x="143.62" y="561.14" width="37.92" height="6.81" fill="#2886de"/>
<rect x="180.94" y="561.14" width="6.82" height="6.81" fill="#1e78d0"/>
<rect x="187.16" y="561.14" width="6.82" height="6.81" fill="#1468c0"/>
<rect x="193.38" y="561.14" width="25.48" height="6.81" fill="#1e78d0"/>
<rect x="218.26" y="561.14" width="13.04" height="6.81" fill="#1468c0"/>
<rect x="230.70" y="561.14" width="6.82" height="6.81" fill="#2886de"/>
<rect x="236.92" y="561.14" width="19.26" height="6.81" fill="#1e78d0"/>
<rect x="255.58" y="561.14" width="6.82" height="6.81" fill="#2886de"/>
<rect x="261.80" y="561.14" width="25.48" height="6.81" fill="#1e78d0"/>
<rect x="286.68" y="561.14" width="6.82" height="6.81" fill="#2886de"/>
<rect x="292.90" y="561.14" width="6.82" height="6.81" fill="#1e78d0"/>
<rect x="299.12" y="561.14" width="6.82" height="6.81" fill="#0a3e9e"/>
<rect x="305.34" y="561.14" width="6.82" height="6.81" fill="#1468c0"/>
<rect x="311.56" y="561.14" width="6.82" height="6.81" fill="#1e78d0"/>
<rect x="317.78" y="561.14" width="13.04" height="6.81" fill="#e4e3e1"/>
<rect x="330.22" y="561.14" width="13.04" height="6.81" fill="#1e78d0"/>
<rect x="342.66" y="561.14" width="6.82" height="6.81" fill="#0a3e9e"/>
<rect x="348.88" y="561.14" width="6.82" height="6.81" fill="#06248c"/>
<rect x="355.10" y="561.14" width="31.70" height="6.81" fill="#0a3e9e"/>
<rect x="386.20" y="561.14" width="6.22" height="6.81" fill="#0d58ae"/>
<rect x="75.20" y="567.35" width="44.14" height="6.81" fill="#2886de"/>
<rect x="118.74" y="567.35" width="6.82" height="6.81" fill="#e4e3e1"/>
<rect x="124.96" y="567.35" width="19.26" height="6.81" fill="#2886de"/>
<rect x="143.62" y="567.35" width="6.82" height="6.81" fill="#52b2fc"/>
<rect x="149.84" y="567.35" width="193.42" height="6.81" fill="#2886de"/>
<rect x="342.66" y="567.35" width="6.82" height="6.81" fill="#1468c0"/>
<rect x="348.88" y="567.35" width="6.82" height="6.81" fill="#0d58ae"/>
<rect x="355.10" y="567.35" width="19.26" height="6.81" fill="#1468c0"/>
<rect x="373.76" y="567.35" width="6.82" height="6.81" fill="#1e78d0"/>
<rect x="379.98" y="567.35" width="6.82" height="6.81" fill="#1468c0"/>
<rect x="386.20" y="567.35" width="6.22" height="6.81" fill="#2886de"/>
<rect x="75.20" y="573.56" width="44.14" height="6.81" fill="#2886de"/>
<rect x="118.74" y="573.56" width="6.82" height="6.81" fill="#1e78d0"/>
<rect x="124.96" y="573.56" width="187.20" height="6.81" fill="#2886de"/>
<rect x="311.56" y="573.56" width="13.04" height="6.81" fill="#e4e3e1"/>
<rect x="324.00" y="573.56" width="13.04" height="6.81" fill="#2886de"/>
<rect x="336.44" y="573.56" width="6.82" height="6.81" fill="#52b2fc"/>
<rect x="342.66" y="573.56" width="6.82" height="6.81" fill="#0d58ae"/>
<rect x="348.88" y="573.56" width="6.82" height="6.81" fill="#0a3e9e"/>
<rect x="355.10" y="573.56" width="31.70" height="6.81" fill="#1468c0"/>
<rect x="386.20" y="573.56" width="6.22" height="6.81" fill="#52b2fc"/>
<rect x="75.20" y="579.77" width="6.82" height="6.81" fill="#2886de"/>
<rect x="81.42" y="579.77" width="44.14" height="6.81" fill="#e4e3e1"/>
<rect x="124.96" y="579.77" width="6.82" height="6.81" fill="#52b2fc"/>
<rect x="131.18" y="579.77" width="25.48" height="6.81" fill="#e4e3e1"/>
<rect x="156.06" y="579.77" width="6.82" height="6.81" fill="#8fcbf8"/>
<rect x="162.28" y="579.77" width="6.82" height="6.81" fill="#2886de"/>
<rect x="168.50" y="579.77" width="6.82" height="6.81" fill="#389af0"/>
<rect x="174.72" y="579.77" width="6.82" height="6.81" fill="#2886de"/>
<rect x="180.94" y="579.77" width="6.82" height="6.81" fill="#8fcbf8"/>
<rect x="187.16" y="579.77" width="75.24" height="6.81" fill="#e4e3e1"/>
<rect x="261.80" y="579.77" width="6.82" height="6.81" fill="#2886de"/>
<rect x="268.02" y="579.77" width="75.24" height="6.81" fill="#e4e3e1"/>
<rect x="342.66" y="579.77" width="6.82" height="6.81" fill="#1468c0"/>
<rect x="348.88" y="579.77" width="13.04" height="6.81" fill="#0d58ae"/>
<rect x="361.32" y="579.77" width="6.82" height="6.81" fill="#1468c0"/>
<rect x="367.54" y="579.77" width="6.82" height="6.81" fill="#0d58ae"/>
<rect x="373.76" y="579.77" width="6.82" height="6.81" fill="#1468c0"/>
<rect x="379.98" y="579.77" width="6.82" height="6.81" fill="#0d58ae"/>
<rect x="386.20" y="579.77" width="6.22" height="6.81" fill="#b9dcf5"/>
<rect x="75.20" y="585.98" width="44.14" height="6.81" fill="#2886de"/>
<rect x="118.74" y="585.98" width="6.82" height="6.81" fill="#e4e3e1"/>
<rect x="124.96" y="585.98" width="193.42" height="6.81" fill="#2886de"/>
<rect x="317.78" y="585.98" width="13.04" height="6.81" fill="#e4e3e1"/>
<rect x="330.22" y="585.98" width="13.04" height="6.81" fill="#2886de"/>
<rect x="342.66" y="585.98" width="44.14" height="6.81" fill="#1468c0"/>
<rect x="386.20" y="585.98" width="6.22" height="6.81" fill="#2886de"/>
<rect x="75.20" y="592.19" width="6.82" height="6.21" fill="#2886de"/>
<rect x="81.42" y="592.19" width="6.82" height="6.21" fill="#52b2fc"/>
<rect x="87.64" y="592.19" width="6.82" height="6.21" fill="#8fcbf8"/>
<rect x="93.86" y="592.19" width="25.48" height="6.21" fill="#2886de"/>
<rect x="118.74" y="592.19" width="6.82" height="6.21" fill="#e4e3e1"/>
<rect x="124.96" y="592.19" width="6.82" height="6.21" fill="#52b2fc"/>
<rect x="131.18" y="592.19" width="13.04" height="6.21" fill="#2886de"/>
<rect x="143.62" y="592.19" width="6.82" height="6.21" fill="#e4e3e1"/>
<rect x="149.84" y="592.19" width="6.82" height="6.21" fill="#8fcbf8"/>
<rect x="156.06" y="592.19" width="13.04" height="6.21" fill="#2886de"/>
<rect x="168.50" y="592.19" width="6.82" height="6.21" fill="#52b2fc"/>
<rect x="174.72" y="592.19" width="19.26" height="6.21" fill="#2886de"/>
<rect x="193.38" y="592.19" width="13.04" height="6.21" fill="#52b2fc"/>
<rect x="205.82" y="592.19" width="25.48" height="6.21" fill="#2886de"/>
<rect x="230.70" y="592.19" width="6.82" height="6.21" fill="#8fcbf8"/>
<rect x="236.92" y="592.19" width="19.26" height="6.21" fill="#2886de"/>
<rect x="255.58" y="592.19" width="6.82" height="6.21" fill="#8fcbf8"/>
<rect x="261.80" y="592.19" width="6.82" height="6.21" fill="#2886de"/>
<rect x="268.02" y="592.19" width="6.82" height="6.21" fill="#8fcbf8"/>
<rect x="274.24" y="592.19" width="13.04" height="6.21" fill="#2886de"/>
<rect x="286.68" y="592.19" width="6.82" height="6.21" fill="#8fcbf8"/>
<rect x="292.90" y="592.19" width="19.26" height="6.21" fill="#2886de"/>
<rect x="311.56" y="592.19" width="13.04" height="6.21" fill="#e4e3e1"/>
<rect x="324.00" y="592.19" width="19.26" height="6.21" fill="#2886de"/>
<rect x="342.66" y="592.19" width="37.92" height="6.21" fill="#1468c0"/>
<rect x="379.98" y="592.19" width="6.82" height="6.21" fill="#0a3e9e"/>
<rect x="386.20" y="592.19" width="6.22" height="6.21" fill="#2886de"/>
<line x1="81.42" y1="374.20" x2="81.42" y2="598.40" stroke="#ffffff" stroke-opacity="0.13" stroke-width="0.7"/>
<line x1="87.64" y1="374.20" x2="87.64" y2="598.40" stroke="#ffffff" stroke-opacity="0.13" stroke-width="0.7"/>
<line x1="93.86" y1="374.20" x2="93.86" y2="598.40" stroke="#ffffff" stroke-opacity="0.13" stroke-width="0.7"/>
<line x1="100.08" y1="374.20" x2="100.08" y2="598.40" stroke="#ffffff" stroke-opacity="0.13" stroke-width="0.7"/>
<line x1="106.30" y1="374.20" x2="106.30" y2="598.40" stroke="#ffffff" stroke-opacity="0.13" stroke-width="0.7"/>
<line x1="112.52" y1="374.20" x2="112.52" y2="598.40" stroke="#ffffff" stroke-opacity="0.13" stroke-width="0.7"/>
<line x1="118.74" y1="374.20" x2="118.74" y2="598.40" stroke="#ffffff" stroke-opacity="0.13" stroke-width="0.7"/>
<line x1="124.96" y1="374.20" x2="124.96" y2="598.40" stroke="#ffffff" stroke-opacity="0.13" stroke-width="0.7"/>
<line x1="131.18" y1="374.20" x2="131.18" y2="598.40" stroke="#ffffff" stroke-opacity="0.13" stroke-width="0.7"/>
<line x1="137.40" y1="374.20" x2="137.40" y2="598.40" stroke="#ffffff" stroke-opacity="0.13" stroke-width="0.7"/>
<line x1="143.62" y1="374.20" x2="143.62" y2="598.40" stroke="#ffffff" stroke-opacity="0.13" stroke-width="0.7"/>
<line x1="149.84" y1="374.20" x2="149.84" y2="598.40" stroke="#ffffff" stroke-opacity="0.13" stroke-width="0.7"/>
<line x1="156.06" y1="374.20" x2="156.06" y2="598.40" stroke="#ffffff" stroke-opacity="0.13" stroke-width="0.7"/>
<line x1="162.28" y1="374.20" x2="162.28" y2="598.40" stroke="#ffffff" stroke-opacity="0.13" stroke-width="0.7"/>
<line x1="168.50" y1="374.20" x2="168.50" y2="598.40" stroke="#ffffff" stroke-opacity="0.13" stroke-width="0.7"/>
<line x1="174.72" y1="374.20" x2="174.72" y2="598.40" stroke="#ffffff" stroke-opacity="0.13" stroke-width="0.7"/>
<line x1="180.94" y1="374.20" x2="180.94" y2="598.40" stroke="#ffffff" stroke-opacity="0.13" stroke-width="0.7"/>
<line x1="187.16" y1="374.20" x2="187.16" y2="598.40" stroke="#ffffff" stroke-opacity="0.13" stroke-width="0.7"/>
<line x1="193.38" y1="374.20" x2="193.38" y2="598.40" stroke="#ffffff" stroke-opacity="0.13" stroke-width="0.7"/>
<line x1="199.60" y1="374.20" x2="199.60" y2="598.40" stroke="#ffffff" stroke-opacity="0.13" stroke-width="0.7"/>
<line x1="205.82" y1="374.20" x2="205.82" y2="598.40" stroke="#ffffff" stroke-opacity="0.13" stroke-width="0.7"/>
<line x1="212.04" y1="374.20" x2="212.04" y2="598.40" stroke="#ffffff" stroke-opacity="0.13" stroke-width="0.7"/>
<line x1="218.26" y1="374.20" x2="218.26" y2="598.40" stroke="#ffffff" stroke-opacity="0.13" stroke-width="0.7"/>
<line x1="224.48" y1="374.20" x2="224.48" y2="598.40" stroke="#ffffff" stroke-opacity="0.13" stroke-width="0.7"/>
<line x1="230.70" y1="374.20" x2="230.70" y2="598.40" stroke="#ffffff" stroke-opacity="0.13" stroke-width="0.7"/>
<line x1="236.92" y1="374.20" x2="236.92" y2="598.40" stroke="#ffffff" stroke-opacity="0.13" stroke-width="0.7"/>
<line x1="243.14" y1="374.20" x2="243.14" y2="598.40" stroke="#ffffff" stroke-opacity="0.13" stroke-width="0.7"/>
<line x1="249.36" y1="374.20" x2="249.36" y2="598.40" stroke="#ffffff" stroke-opacity="0.13" stroke-width="0.7"/>
<line x1="255.58" y1="374.20" x2="255.58" y2="598.40" stroke="#ffffff" stroke-opacity="0.13" stroke-width="0.7"/>
<line x1="261.80" y1="374.20" x2="261.80" y2="598.40" stroke="#ffffff" stroke-opacity="0.13" stroke-width="0.7"/>
<line x1="268.02" y1="374.20" x2="268.02" y2="598.40" stroke="#ffffff" stroke-opacity="0.13" stroke-width="0.7"/>
<line x1="274.24" y1="374.20" x2="274.24" y2="598.40" stroke="#ffffff" stroke-opacity="0.13" stroke-width="0.7"/>
<line x1="280.46" y1="374.20" x2="280.46" y2="598.40" stroke="#ffffff" stroke-opacity="0.13" stroke-width="0.7"/>
<line x1="286.68" y1="374.20" x2="286.68" y2="598.40" stroke="#ffffff" stroke-opacity="0.13" stroke-width="0.7"/>
<line x1="292.90" y1="374.20" x2="292.90" y2="598.40" stroke="#ffffff" stroke-opacity="0.13" stroke-width="0.7"/>
<line x1="299.12" y1="374.20" x2="299.12" y2="598.40" stroke="#ffffff" stroke-opacity="0.13" stroke-width="0.7"/>
<line x1="305.34" y1="374.20" x2="305.34" y2="598.40" stroke="#ffffff" stroke-opacity="0.13" stroke-width="0.7"/>
<line x1="311.56" y1="374.20" x2="311.56" y2="598.40" stroke="#ffffff" stroke-opacity="0.13" stroke-width="0.7"/>
<line x1="317.78" y1="374.20" x2="317.78" y2="598.40" stroke="#ffffff" stroke-opacity="0.13" stroke-width="0.7"/>
<line x1="324.00" y1="374.20" x2="324.00" y2="598.40" stroke="#ffffff" stroke-opacity="0.13" stroke-width="0.7"/>
<line x1="330.22" y1="374.20" x2="330.22" y2="598.40" stroke="#ffffff" stroke-opacity="0.13" stroke-width="0.7"/>
<line x1="336.44" y1="374.20" x2="336.44" y2="598.40" stroke="#ffffff" stroke-opacity="0.13" stroke-width="0.7"/>
<line x1="342.66" y1="374.20" x2="342.66" y2="598.40" stroke="#ffffff" stroke-opacity="0.13" stroke-width="0.7"/>
<line x1="348.88" y1="374.20" x2="348.88" y2="598.40" stroke="#ffffff" stroke-opacity="0.13" stroke-width="0.7"/>
<line x1="355.10" y1="374.20" x2="355.10" y2="598.40" stroke="#ffffff" stroke-opacity="0.13" stroke-width="0.7"/>
<line x1="361.32" y1="374.20" x2="361.32" y2="598.40" stroke="#ffffff" stroke-opacity="0.13" stroke-width="0.7"/>
<line x1="367.54" y1="374.20" x2="367.54" y2="598.40" stroke="#ffffff" stroke-opacity="0.13" stroke-width="0.7"/>
<line x1="373.76" y1="374.20" x2="373.76" y2="598.40" stroke="#ffffff" stroke-opacity="0.13" stroke-width="0.7"/>
<line x1="379.98" y1="374.20" x2="379.98" y2="598.40" stroke="#ffffff" stroke-opacity="0.13" stroke-width="0.7"/>
<line x1="386.20" y1="374.20" x2="386.20" y2="598.40" stroke="#ffffff" stroke-opacity="0.13" stroke-width="0.7"/>
<line x1="75.20" y1="418.31" x2="392.42" y2="418.31" stroke="#ffffff" stroke-opacity="0.13" stroke-width="0.7"/>
<line x1="75.20" y1="424.52" x2="392.42" y2="424.52" stroke="#ffffff" stroke-opacity="0.13" stroke-width="0.7"/>
<line x1="75.20" y1="430.73" x2="392.42" y2="430.73" stroke="#ffffff" stroke-opacity="0.13" stroke-width="0.7"/>
<line x1="75.20" y1="436.94" x2="392.42" y2="436.94" stroke="#ffffff" stroke-opacity="0.13" stroke-width="0.7"/>
<line x1="75.20" y1="443.15" x2="392.42" y2="443.15" stroke="#ffffff" stroke-opacity="0.13" stroke-width="0.7"/>
<line x1="75.20" y1="449.36" x2="392.42" y2="449.36" stroke="#ffffff" stroke-opacity="0.13" stroke-width="0.7"/>
<line x1="75.20" y1="455.57" x2="392.42" y2="455.57" stroke="#ffffff" stroke-opacity="0.13" stroke-width="0.7"/>
<line x1="75.20" y1="461.78" x2="392.42" y2="461.78" stroke="#ffffff" stroke-opacity="0.13" stroke-width="0.7"/>
<line x1="75.20" y1="467.99" x2="392.42" y2="467.99" stroke="#ffffff" stroke-opacity="0.13" stroke-width="0.7"/>
<line x1="75.20" y1="474.20" x2="392.42" y2="474.20" stroke="#ffffff" stroke-opacity="0.13" stroke-width="0.7"/>
<line x1="75.20" y1="480.41" x2="392.42" y2="480.41" stroke="#ffffff" stroke-opacity="0.13" stroke-width="0.7"/>
<line x1="75.20" y1="486.62" x2="392.42" y2="486.62" stroke="#ffffff" stroke-opacity="0.13" stroke-width="0.7"/>
<line x1="75.20" y1="492.83" x2="392.42" y2="492.83" stroke="#ffffff" stroke-opacity="0.13" stroke-width="0.7"/>
<line x1="75.20" y1="499.04" x2="392.42" y2="499.04" stroke="#ffffff" stroke-opacity="0.13" stroke-width="0.7"/>
<line x1="75.20" y1="505.25" x2="392.42" y2="505.25" stroke="#ffffff" stroke-opacity="0.13" stroke-width="0.7"/>
<line x1="75.20" y1="511.46" x2="392.42" y2="511.46" stroke="#ffffff" stroke-opacity="0.13" stroke-width="0.7"/>
<line x1="75.20" y1="517.67" x2="392.42" y2="517.67" stroke="#ffffff" stroke-opacity="0.13" stroke-width="0.7"/>
<line x1="75.20" y1="523.88" x2="392.42" y2="523.88" stroke="#ffffff" stroke-opacity="0.13" stroke-width="0.7"/>
<line x1="75.20" y1="530.09" x2="392.42" y2="530.09" stroke="#ffffff" stroke-opacity="0.13" stroke-width="0.7"/>
<line x1="75.20" y1="536.30" x2="392.42" y2="536.30" stroke="#ffffff" stroke-opacity="0.13" stroke-width="0.7"/>
<line x1="75.20" y1="542.51" x2="392.42" y2="542.51" stroke="#ffffff" stroke-opacity="0.13" stroke-width="0.7"/>
<line x1="75.20" y1="548.72" x2="392.42" y2="548.72" stroke="#ffffff" stroke-opacity="0.13" stroke-width="0.7"/>
<line x1="75.20" y1="554.93" x2="392.42" y2="554.93" stroke="#ffffff" stroke-opacity="0.13" stroke-width="0.7"/>
<line x1="75.20" y1="561.14" x2="392.42" y2="561.14" stroke="#ffffff" stroke-opacity="0.13" stroke-width="0.7"/>
<line x1="75.20" y1="567.35" x2="392.42" y2="567.35" stroke="#ffffff" stroke-opacity="0.13" stroke-width="0.7"/>
<line x1="75.20" y1="573.56" x2="392.42" y2="573.56" stroke="#ffffff" stroke-opacity="0.13" stroke-width="0.7"/>
<line x1="75.20" y1="579.77" x2="392.42" y2="579.77" stroke="#ffffff" stroke-opacity="0.13" stroke-width="0.7"/>
<line x1="75.20" y1="585.98" x2="392.42" y2="585.98" stroke="#ffffff" stroke-opacity="0.13" stroke-width="0.7"/>
<line x1="75.20" y1="592.19" x2="392.42" y2="592.19" stroke="#ffffff" stroke-opacity="0.13" stroke-width="0.7"/>
<text x="73.8" y="378.70" text-anchor="end" font-size="4.9" fill="#222" transform="rotate(0.3 73.8 378.70)">structure</text>
<text x="73.8" y="384.53" text-anchor="end" font-size="4.9" fill="#222" transform="rotate(0.3 73.8 384.53)">age</text>
<text x="73.8" y="390.36" text-anchor="end" font-size="4.9" fill="#222" transform="rotate(0.3 73.8 390.36)">stage</text>
<text x="73.8" y="396.19" text-anchor="end" font-size="4.9" fill="#222" transform="rotate(0.3 73.8 396.19)">strain</text>
<text x="73.8" y="402.02" text-anchor="end" font-size="4.9" fill="#222" transform="rotate(0.3 73.8 402.02)">sex</text>
<text x="73.8" y="407.85" text-anchor="end" font-size="4.9" fill="#222" transform="rotate(0.3 73.8 407.85)">expID</text>
<text x="73.6" y="326" text-anchor="end" font-size="5.2" fill="#222" transform="rotate(0.3 73.6 326)">label</text>
<text x="399.2" y="408" font-size="4.75" fill="#222" transform="rotate(-0.3 399.2 408)">Gene Symbol</text>
<text x="395.8" y="417.10" font-size="5.15" fill="#111" transform="rotate(-0.3 395.8 417.10)">Eef1a1</text>
<text x="395.8" y="423.31" font-size="5.15" fill="#111" transform="rotate(-0.3 395.8 423.31)">Atp2a2</text>
<text x="395.8" y="429.52" font-size="5.15" fill="#111" transform="rotate(-0.3 395.8 429.52)">Actb</text>
<text x="395.8" y="435.73" font-size="5.15" fill="#111" transform="rotate(-0.3 395.8 435.73)">Eef2</text>
<text x="395.8" y="441.94" font-size="5.15" fill="#111" transform="rotate(-0.3 395.8 441.94)">Hsp90ab1</text>
<text x="395.8" y="448.15" font-size="5.15" fill="#111" transform="rotate(-0.3 395.8 448.15)">Atp5f1a</text>
<text x="395.8" y="454.36" font-size="5.15" fill="#111" transform="rotate(-0.3 395.8 454.36)">Atp5f1b</text>
<text x="395.8" y="460.57" font-size="5.15" fill="#111" transform="rotate(-0.3 395.8 460.57)">Actn2</text>
<text x="395.8" y="466.78" font-size="5.15" fill="#111" transform="rotate(-0.3 395.8 466.78)">Eno3</text>
<text x="395.8" y="472.99" font-size="5.15" fill="#111" transform="rotate(-0.3 395.8 472.99)">Tpm1</text>
<text x="395.8" y="479.20" font-size="5.15" fill="#111" transform="rotate(-0.3 395.8 479.20)">Ltf</text>
<text x="395.8" y="485.41" font-size="5.15" fill="#111" transform="rotate(-0.3 395.8 485.41)">Ager</text>
<text x="395.8" y="491.62" font-size="5.15" fill="#111" transform="rotate(-0.3 395.8 491.62)">Cd74</text>
<text x="395.8" y="497.83" font-size="5.15" fill="#111" transform="rotate(-0.3 395.8 497.83)">B2m</text>
<text x="395.8" y="504.04" font-size="5.15" fill="#111" transform="rotate(-0.3 395.8 504.04)">Gsn</text>
<text x="395.8" y="510.25" font-size="5.15" fill="#111" transform="rotate(-0.3 395.8 510.25)">Cst3</text>
<text x="395.8" y="516.46" font-size="5.15" fill="#111" transform="rotate(-0.3 395.8 516.46)">Cd36</text>
<text x="395.8" y="522.67" font-size="5.15" fill="#111" transform="rotate(-0.3 395.8 522.67)">Lpl</text>
<text x="395.8" y="528.88" font-size="5.15" fill="#111" transform="rotate(-0.3 395.8 528.88)">Cryab</text>
<text x="395.8" y="535.09" font-size="5.15" fill="#111" transform="rotate(-0.3 395.8 535.09)">Bsg</text>
<text x="395.8" y="541.30" font-size="5.15" fill="#111" transform="rotate(-0.3 395.8 541.30)">Des</text>
<text x="395.8" y="547.51" font-size="5.15" fill="#111" transform="rotate(-0.3 395.8 547.51)">Vdac1</text>
<text x="395.8" y="553.72" font-size="5.15" fill="#111" transform="rotate(-0.3 395.8 553.72)">Apoe</text>
<text x="395.8" y="559.93" font-size="5.15" fill="#111" transform="rotate(-0.3 395.8 559.93)">Lgals1</text>
<text x="395.8" y="566.14" font-size="5.15" fill="#111" transform="rotate(-0.3 395.8 566.14)">Itm2b</text>
<text x="395.8" y="572.35" font-size="5.15" fill="#111" transform="rotate(-0.3 395.8 572.35)">Adgrf5</text>
<text x="395.8" y="578.56" font-size="5.15" fill="#111" transform="rotate(-0.3 395.8 578.56)">Calcrl</text>
<text x="395.8" y="584.77" font-size="5.15" fill="#111" transform="rotate(-0.3 395.8 584.77)">Cldn18</text>
<text x="395.8" y="590.98" font-size="5.15" fill="#111" transform="rotate(-0.3 395.8 590.98)">Emp2</text>
<text x="395.8" y="597.19" font-size="5.15" fill="#111" transform="rotate(-0.3 395.8 597.19)">Ace</text>
<path d="M31.00 415.21H75.20M35.34 421.42H75.20M35.34 421.42V599.00M61.43 427.62H75.20M65.83 433.84H75.20M65.83 440.05H75.20M65.83 433.84V440.05M61.43 436.94H65.83M61.43 427.62V436.94M52.13 432.28H61.43M68.44 446.25H75.20M68.44 452.47H75.20M68.44 446.25V452.47M57.68 449.36H68.44M69.58 458.68H75.20M69.58 464.88H75.20M69.58 458.68V464.88M65.83 461.78H69.58M65.83 471.10H75.20M65.83 461.78V471.10M57.68 466.44H65.83M57.68 449.36V466.44M52.13 457.90H57.68M52.13 432.28V457.90M43.00 445.09H52.13M43.00 445.09V599.00M52.13 477.31H75.20M52.13 477.31V599.00M71.70 483.52H75.20M71.70 489.73H75.20M71.70 483.52V489.73M64.69 486.62H71.70M64.69 495.94H75.20M64.69 486.62V495.94M62.57 491.28H64.69M62.57 502.15H75.20M62.57 491.28V502.15M59.96 496.71H62.57M59.96 508.36H75.20M59.96 496.71V508.36M56.53 502.53H59.96M56.53 502.53V599.00M68.76 514.57H75.20M68.76 520.77H75.20M68.76 514.57V520.77M67.46 517.67H68.76M70.07 526.99H75.20M70.07 533.20H75.20M70.07 526.99V533.20M68.76 530.09H70.07M71.37 539.40H75.20M71.37 545.62H75.20M71.37 539.40V545.62M68.76 542.51H71.37M68.76 530.09V542.51M67.46 536.30H68.76M67.46 517.67V536.30M63.06 526.99H67.46M63.06 526.99V599.00M70.39 551.83H75.20M69.09 558.04H75.20M69.09 564.25H75.20M69.09 558.04V564.25M67.95 561.14H69.09M70.39 551.83V551.83M67.95 551.83H70.39M67.95 551.83V573.14M73.98 570.46H75.20M73.98 576.66H75.20M73.98 582.88H75.20M73.98 589.09H75.20M73.98 595.30H75.20M73.98 570.46V599.00M73.17 572.46V599.00M72.35 582.88V599.00" fill="none" stroke="#6e6e6e" stroke-width="0.6"/>
</svg>
</div></div>
</body></html>
